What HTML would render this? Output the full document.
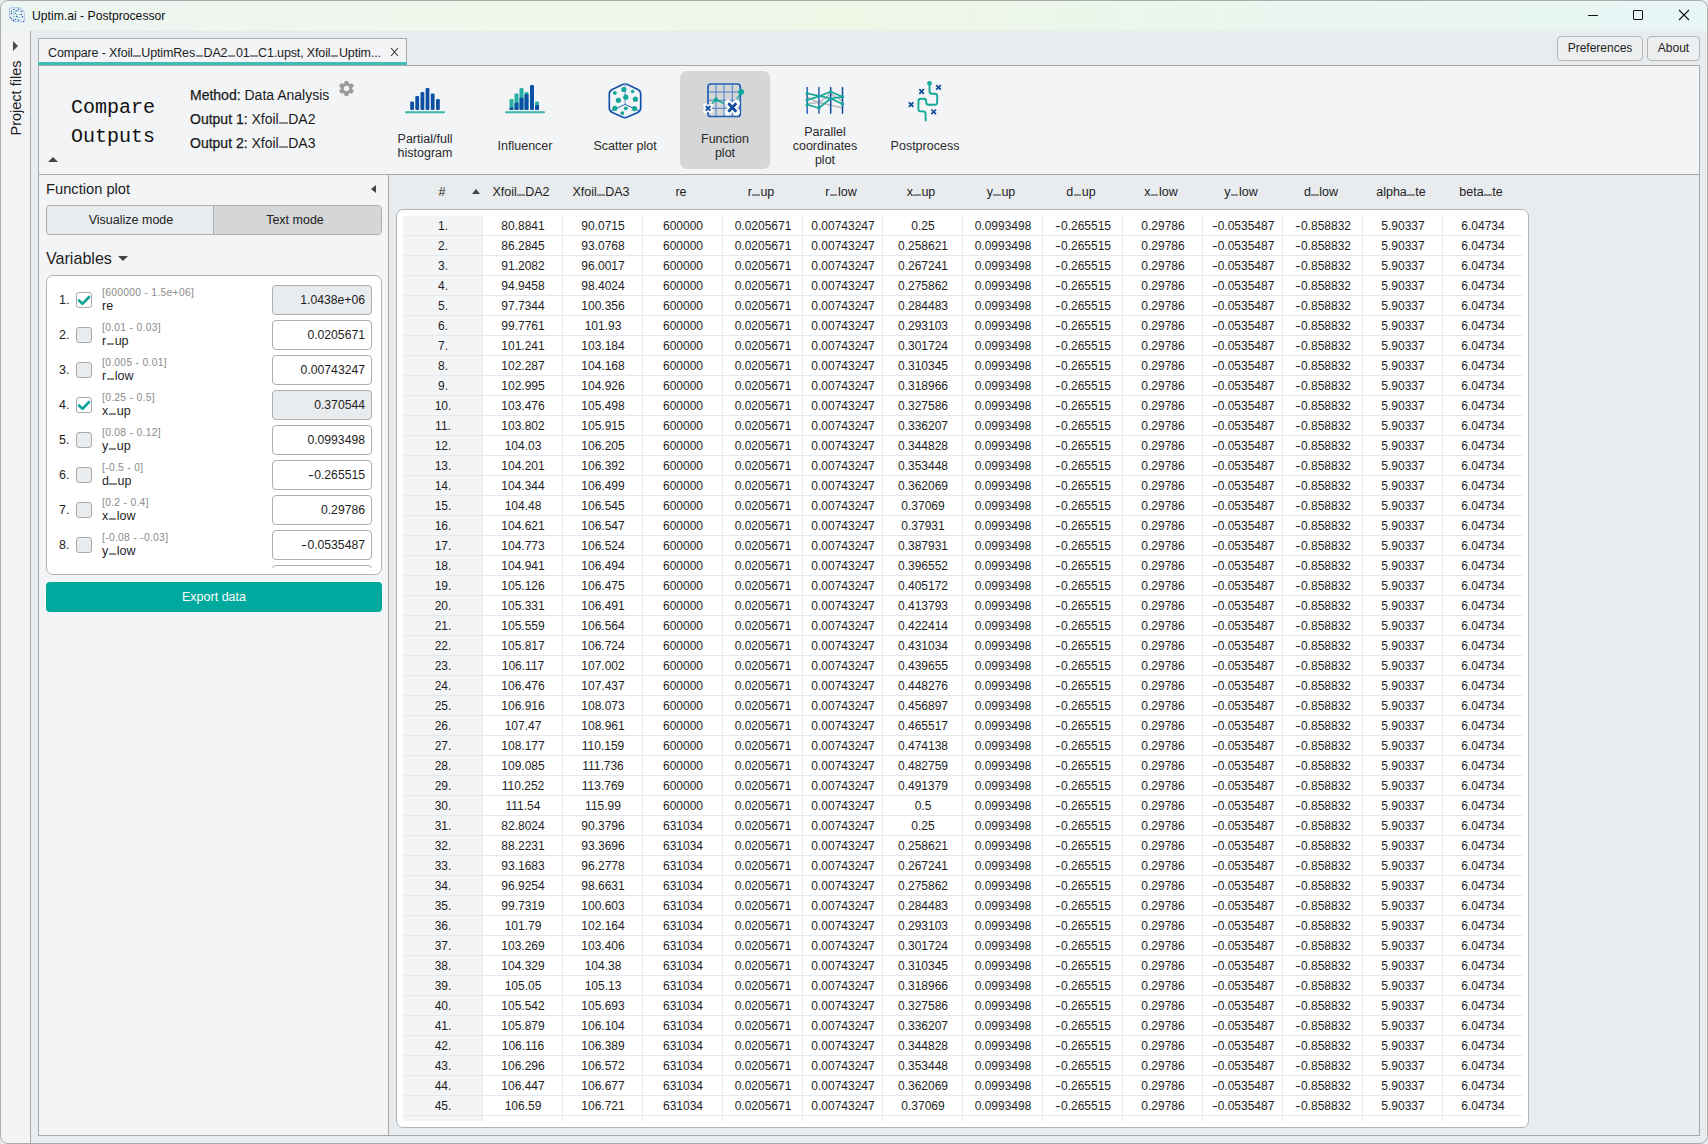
<!DOCTYPE html><html><head><meta charset="utf-8"><style>
*{box-sizing:border-box;margin:0;padding:0}
html,body{width:1708px;height:1144px;overflow:hidden;background:#e9ecef;font-family:'Liberation Sans', sans-serif;color:#1c1c1c}
.a{position:absolute}
.t{position:absolute;white-space:nowrap}
.u{display:inline-block;width:0.6em;height:0.14em;background:#8c8c8c;margin:0 0.04em;vertical-align:0}
.m{display:inline-block;transform:scaleX(1.45);margin:0 1px}
</style></head><body><div class="a" style="left:0;top:0;width:1708px;height:1144px;background:#e9ecef;border:1px solid #ababab;border-radius:8px;overflow:hidden">
</div>
<div class="a" style="left:1px;top:1px;width:1706px;height:30px;border-radius:8px 8px 0 0;background:linear-gradient(90deg,#edf5f3 0%,#f1f6ea 30%,#eef6e6 50%,#e9f6ef 75%,#e7f5f5 100%)"></div>
<div class="t" style="left:32px;top:8.57px;font-size:12.2px;line-height:15px;color:#111;">Uptim.ai - Postprocessor</div>
<svg class="a" style="left:0;top:0" width="30" height="30" viewBox="0 0 30 30">
<path d="M10.5 7.8 H19.5 L24.3 12.3 V20.8 Q24.3 21.8 23.3 21.8 H14.2 L9.5 17.2 V8.8 Q9.5 7.8 10.5 7.8 Z" fill="#f7fbfc" stroke="#a9c4e2" stroke-width="1.1"/>
<path d="M13.8 11.4 H23.6 M13.8 11.4 V21.4 M9.8 8.2 L13.8 11.4" stroke="#b4cbe6" stroke-width="0.9" fill="none"/>
<path d="M16.2 14.5 H21.3 M12.5 16.3 H17 M17.3 16.5 V20 M19.8 19.6 H21.6 M16 10.5 L13.2 13" stroke="#7fd0c4" stroke-width="0.9" fill="none"/>
<g fill="#2d63b0"><circle cx="13.9" cy="9.4" r="0.8"/><circle cx="18.4" cy="9.3" r="0.85"/><circle cx="16.4" cy="10.6" r="0.7"/><circle cx="11.4" cy="11.2" r="0.7"/><circle cx="11.5" cy="13.6" r="0.85"/><circle cx="15.5" cy="13.4" r="0.7"/><circle cx="21.5" cy="11.4" r="0.7"/><circle cx="21.3" cy="14.4" r="0.85"/><circle cx="17" cy="16.4" r="0.8"/><circle cx="22.4" cy="16.8" r="0.85"/><circle cx="15.5" cy="19.4" r="0.75"/><circle cx="18.5" cy="20.2" r="0.8"/><circle cx="13.4" cy="20.4" r="0.7"/><circle cx="23.5" cy="21.3" r="0.6"/><circle cx="10.6" cy="17.3" r="0.6"/><circle cx="11.6" cy="18.6" r="0.6"/><circle cx="19.4" cy="17.4" r="0.5"/></g>
</svg>
<div class="a" style="left:1588px;top:15px;width:10px;height:1px;background:#111"></div>
<div class="a" style="left:1633px;top:10px;width:10px;height:10px;border:1px solid #111;border-radius:1px"></div>
<svg class="a" style="left:1678px;top:9px" width="12" height="12" viewBox="0 0 12 12"><path d="M1 1 L11 11 M11 1 L1 11" stroke="#111" stroke-width="1.1"/></svg>
<div class="a" style="left:1px;top:31px;width:30px;height:1112px;background:#f3f4f6;border-right:1px solid #a9a9a9;border-bottom-left-radius:7px"></div>
<div class="a" style="left:13px;top:41px;width:0;height:0;border-top:5px solid transparent;border-bottom:5px solid transparent;border-left:5.5px solid #4a4a4a"></div>
<div class="t" style="left:-24px;top:87.6px;width:80px;height:20px;font-size:14.5px;line-height:20px;text-align:center;transform:rotate(-90deg);color:#222">Project files</div>
<div class="a" style="left:38px;top:38px;width:369px;height:28px;background:#f3f4f6;border:1px solid #a9a9a9;border-bottom:none"></div>
<div class="a" style="left:38px;top:62px;width:369px;height:3px;background:#3dbdb3"></div>
<div class="t" style="left:48px;top:44.67px;font-size:12.5px;line-height:16px;color:#222;letter-spacing:-0.14px">Compare - Xfoil<span class="u"></span>UptimRes<span class="u"></span>DA2<span class="u"></span>01<span class="u"></span>C1.upst, Xfoil<span class="u"></span>Uptim...</div>
<svg class="a" style="left:390px;top:47px" width="9" height="10" viewBox="0 0 9 10"><path d="M1 1 L8 9 M8 1 L1 9" stroke="#333" stroke-width="1.1"/></svg>
<div class="a" style="left:1557px;top:36px;width:86px;height:25px;border:1px solid #b5b5b5;border-radius:4px;background:#eceef0"></div>
<div class="t" style="left:1557.00px;top:41.34px;width:86px;text-align:center;font-size:12px;line-height:15px;color:#222;">Preferences</div>
<div class="a" style="left:1647px;top:36px;width:53px;height:25px;border:1px solid #b5b5b5;border-radius:4px;background:#eceef0"></div>
<div class="t" style="left:1647.00px;top:41.34px;width:53px;text-align:center;font-size:12px;line-height:15px;color:#222;">About</div>
<div class="a" style="left:38px;top:65px;width:1662px;height:1071px;border:1px solid #a9a9a9;background:#e9ecef"></div>
<div class="a" style="left:39px;top:66px;width:1660px;height:109px;background:#f3f4f6;border-bottom:1px solid #a9a9a9"></div>
<div class="t" style="left:71px;top:95.17px;font-size:20px;line-height:25px;font-family:'Liberation Mono', monospace;color:#111;transform:scaleY(1.035);transform-origin:0 71%">Compare</div>
<div class="t" style="left:71px;top:124.17px;font-size:20px;line-height:25px;font-family:'Liberation Mono', monospace;color:#111;transform:scaleY(1.035);transform-origin:0 71%">Outputs</div>
<div class="a" style="left:48px;top:157px;width:0;height:0;border-left:5px solid transparent;border-right:5px solid transparent;border-bottom:5px solid #444"></div>
<div class="t" style="left:190px;top:86.15px;font-size:14px;line-height:18px;color:#1a1a1a;"><span style="-webkit-text-stroke:0.25px #1a1a1a">Method:</span> Data Analysis</div>
<div class="t" style="left:190px;top:110.15px;font-size:14px;line-height:18px;color:#1a1a1a;"><span style="-webkit-text-stroke:0.25px #1a1a1a">Output 1:</span> Xfoil<span class="u"></span>DA2</div>
<div class="t" style="left:190px;top:134.15px;font-size:14px;line-height:18px;color:#1a1a1a;"><span style="-webkit-text-stroke:0.25px #1a1a1a">Output 2:</span> Xfoil<span class="u"></span>DA3</div>
<svg class="a" style="left:337px;top:78.5px" width="19" height="19" viewBox="0 0 24 24"><path fill="#9a9a9c" d="M19.14 12.94c.04-.3.06-.61.06-.94 0-.32-.02-.64-.07-.94l2.03-1.58a.49.49 0 0 0 .12-.61l-1.92-3.32a.488.488 0 0 0-.59-.22l-2.39.96c-.5-.38-1.03-.7-1.62-.94l-.36-2.54a.484.484 0 0 0-.48-.41h-3.84c-.24 0-.43.17-.47.41l-.36 2.54c-.59.24-1.13.57-1.62.94l-2.39-.96c-.22-.08-.47 0-.59.22L2.74 8.87c-.12.21-.08.47.12.61l2.03 1.58c-.05.3-.09.63-.09.94s.02.64.07.94l-2.03 1.58a.49.49 0 0 0-.12.61l1.92 3.32c.12.22.37.29.59.22l2.39-.96c.5.38 1.03.7 1.62.94l.36 2.54c.05.24.24.41.48.41h3.84c.24 0 .44-.17.47-.41l.36-2.54c.59-.24 1.13-.56 1.62-.94l2.39.96c.22.08.47 0 .59-.22l1.92-3.32c.12-.22.07-.47-.12-.61l-2.01-1.58zM12 15.6c-1.98 0-3.6-1.62-3.6-3.6s1.62-3.6 3.6-3.6 3.6 1.62 3.6 3.6-1.62 3.6-3.6 3.6z"/></svg>
<div class="a" style="left:680px;top:71px;width:90px;height:98px;background:#d5d6d8;border-radius:7px"></div>
<div class="t" style="left:375.00px;top:130.67px;width:100px;text-align:center;font-size:12.5px;line-height:16px;color:#2a2a2a;">Partial/full</div>
<div class="t" style="left:375.00px;top:144.67px;width:100px;text-align:center;font-size:12.5px;line-height:16px;color:#2a2a2a;">histogram</div>
<div class="t" style="left:475.00px;top:137.67px;width:100px;text-align:center;font-size:12.5px;line-height:16px;color:#2a2a2a;">Influencer</div>
<div class="t" style="left:575.00px;top:137.67px;width:100px;text-align:center;font-size:12.5px;line-height:16px;color:#2a2a2a;">Scatter plot</div>
<div class="t" style="left:675.00px;top:130.67px;width:100px;text-align:center;font-size:12.5px;line-height:16px;color:#2a2a2a;">Function</div>
<div class="t" style="left:675.00px;top:144.67px;width:100px;text-align:center;font-size:12.5px;line-height:16px;color:#2a2a2a;">plot</div>
<div class="t" style="left:775.00px;top:123.67px;width:100px;text-align:center;font-size:12.5px;line-height:16px;color:#2a2a2a;">Parallel</div>
<div class="t" style="left:775.00px;top:137.67px;width:100px;text-align:center;font-size:12.5px;line-height:16px;color:#2a2a2a;">coordinates</div>
<div class="t" style="left:775.00px;top:151.67px;width:100px;text-align:center;font-size:12.5px;line-height:16px;color:#2a2a2a;">plot</div>
<div class="t" style="left:875.00px;top:137.67px;width:100px;text-align:center;font-size:12.5px;line-height:16px;color:#2a2a2a;">Postprocess</div>
<svg class="a" style="left:380px;top:66px" width="600" height="70" viewBox="380 66 600 70">
<!-- histogram -->
<rect x="405" y="111.2" width="40" height="2" rx="1" fill="#38b6aa"/>
<g fill="#0b50a2">
<rect x="410.2" y="101.5" width="3.8" height="8.5" rx="1.2"/>
<rect x="415.3" y="96" width="3.8" height="14" rx="1.2"/>
<rect x="420.5" y="92" width="3.8" height="18" rx="1.2"/>
<rect x="425.6" y="88" width="3.8" height="22" rx="1.2"/>
<rect x="430.8" y="93.5" width="3.8" height="16.5" rx="1.2"/>
<rect x="436" y="99" width="3.8" height="11" rx="1.2"/>
</g>
<!-- influencer -->
<rect x="505" y="111.2" width="40" height="2" rx="1" fill="#38b6aa"/>
<g fill="#2ab0a2">
<rect x="509.5" y="99" width="4" height="11" rx="1.2"/>
<rect x="514.5" y="93.5" width="4" height="16.5" rx="1.2"/>
<rect x="519.5" y="88" width="4" height="22" rx="1.2"/>
<rect x="524.5" y="92" width="4" height="18" rx="1.2"/>
<rect x="535" y="101.5" width="4" height="8.5" rx="1.2"/>
</g>
<g fill="#0b50a2">
<rect x="509.5" y="107.5" width="4" height="2.5" rx="1"/>
<rect x="514.5" y="102.5" width="4" height="7.5" rx="1.2"/>
<rect x="519.5" y="97.5" width="4" height="12.5" rx="1.2"/>
<rect x="524.5" y="94" width="4" height="16" rx="1.2"/>
<rect x="530" y="85" width="4" height="25" rx="1.2"/>
<rect x="535" y="105" width="4" height="5" rx="1.2"/>
</g>
<!-- scatter -->
<path d="M622.5 84.6 Q625 83.4 627.5 84.6 L637.8 89.4 Q640.7 90.8 640.7 93.8 V108 Q640.7 111 637.8 112.4 L627.5 117.1 Q625 118.3 622.5 117.1 L612.2 112.4 Q609.3 111 609.3 108 V93.8 Q609.3 90.8 612.2 89.4 Z" fill="none" stroke="#1554a8" stroke-width="1.7"/>
<path d="M625.1 84 V104.4" stroke="#7c9fd2" stroke-width="1.1" fill="none"/>
<path d="M625.1 104.4 L610.3 111.2 M625.1 104.4 L639.9 111.2" stroke="#2a63b2" stroke-width="1" fill="none"/>
<g fill="#14a899">
<circle cx="623.8" cy="89.5" r="2.6"/><circle cx="614.9" cy="93" r="1.9"/><circle cx="632.6" cy="91.5" r="1.8"/>
<circle cx="625.8" cy="97.2" r="2.6"/><circle cx="618.4" cy="100.3" r="2.6"/><circle cx="635.4" cy="99.2" r="2.6"/>
<circle cx="614.9" cy="108.3" r="2.6"/><circle cx="625.8" cy="108.3" r="1.9"/><circle cx="634.5" cy="108.6" r="2.6"/><circle cx="622.3" cy="113.1" r="1.9"/>
</g>
<!-- function plot -->
<rect x="708" y="84" width="32.3" height="32.5" rx="2.8" fill="none" stroke="#1f5fb3" stroke-width="1.7"/>
<path d="M716 84.5 V116 M724 84.5 V116 M732.3 84.5 V116 M708.5 92 H740 M708.5 100.3 H740 M708.5 108.3 H740" stroke="#4a7fc6" stroke-width="1"/>
<path d="M710.5 105 L716 99.8 L726 104.3 M736.5 100 L741 92" stroke="#14a899" stroke-width="1.5" fill="none"/>
<circle cx="716" cy="99.8" r="2.3" fill="#14a899"/>
<circle cx="741.1" cy="92" r="2.9" fill="#14a899"/>
<path d="M705.5 105.7 L710.7 110.9 M710.7 105.7 L705.5 110.9" stroke="#fff" stroke-width="4.5" stroke-linecap="round"/>
<path d="M705.8 106 L710.4 110.6 M710.4 106 L705.8 110.6" stroke="#0f4c9c" stroke-width="1.8"/>
<path d="M728 103 L736.6 112 M736.6 103 L728 112" stroke="#fff" stroke-width="6.5" stroke-linecap="round"/>
<path d="M728.3 103.3 L736.3 111.7 M736.3 103.3 L728.3 111.7" stroke="#0f4c9c" stroke-width="2.8"/>
<!-- parallel -->
<g stroke="#bdbdbd" stroke-width="1.6" fill="none"><path d="M807.2 97.1 L818.9 102.7 L830.7 94 L842.5 101"/><path d="M807.2 103.8 L818.9 102.4 L830.7 105.2 L842.5 108"/></g>
<path d="M807.2 87.5 V113.2 M818.9 87.5 V113.2" stroke="#2963b5" stroke-width="1.5" stroke-linecap="round"/>
<path d="M830.7 87.5 V113.2 M842.5 87.5 V113.2" stroke="#0d4b9c" stroke-width="1.5" stroke-linecap="round"/>
<g stroke="#14a899" stroke-width="1.7" fill="none" stroke-linejoin="round"><path d="M807.2 93.5 L818.9 95.9 L830.7 98.5 L842.5 104"/><path d="M807.2 100 L818.9 96.4 L830.7 91.8 L842.5 96.8"/><path d="M807.2 104.7 L818.9 108 L830.7 98.5 L842.5 96.8"/></g>
<g fill="#14a899"><circle cx="807.2" cy="93.5" r="1.7"/><circle cx="807.2" cy="100" r="1.7"/><circle cx="807.2" cy="104.7" r="1.7"/><circle cx="818.9" cy="108" r="1.7"/><circle cx="830.7" cy="91.8" r="1.6"/><circle cx="842.5" cy="96.8" r="1.7"/><circle cx="842.5" cy="104" r="1.8"/></g>
<!-- postprocess -->
<path d="M929.5 83 V91 Q929.5 93.7 932 93.7 H934.7 Q937.2 93.7 937.2 96.2 V102.3 Q937.2 104.8 934.7 104.8 H928.7 Q926.2 104.8 926.2 102.3 V101.2 Q926.2 98.7 923.7 98.7 H920.9 Q918.4 98.7 918.4 101.2 V108.9 Q918.4 111.4 920.9 111.4 H923.1 Q925.6 111.4 925.6 113.9 V120.5" stroke="#14a899" stroke-width="1.9" fill="none" stroke-linecap="round"/>
<circle cx="929.5" cy="83.2" r="2.3" fill="#14a899"/>
<g stroke="#0f4c9c" stroke-width="1.7"><path d="M936.2 85.1 L940.8 89.7 M940.8 85.1 L936.2 89.7"/><path d="M919.3 89.2 L923.9 93.8 M923.9 89.2 L919.3 93.8"/><path d="M908.8 102.3 L913.4 106.9 M913.4 102.3 L908.8 106.9"/><path d="M931.4 109.5 L936 114.1 M936 109.5 L931.4 114.1"/></g>
</svg>
<div class="a" style="left:39px;top:175px;width:350px;height:960px;background:#f3f4f6;border-right:1px solid #a9a9a9"></div>
<div class="t" style="left:46px;top:179.91px;font-size:14.7px;line-height:18px;color:#1e1e1e;">Function plot</div>
<div class="a" style="left:371px;top:184.8px;width:0;height:0;border-top:4.9px solid transparent;border-bottom:4.9px solid transparent;border-right:5px solid #444"></div>
<div class="a" style="left:46px;top:205px;width:336px;height:30px;border:1px solid #aeaeae;border-radius:4px;overflow:hidden;background:#e9ecef"><div class="a" style="left:166px;top:0;width:169px;height:28px;background:#d5d6d8;border-left:1px solid #aeaeae"></div></div>
<div class="t" style="left:48.00px;top:211.67px;width:166px;text-align:center;font-size:12.5px;line-height:16px;color:#222;">Visualize mode</div>
<div class="t" style="left:212.00px;top:211.67px;width:166px;text-align:center;font-size:12.5px;line-height:16px;color:#222;">Text mode</div>
<div class="t" style="left:46px;top:248.42px;font-size:16.1px;line-height:20px;color:#1e1e1e;">Variables</div>
<div class="a" style="left:118px;top:256px;width:0;height:0;border-left:5px solid transparent;border-right:5px solid transparent;border-top:5px solid #444"></div>
<div class="a" style="left:46px;top:275px;width:336px;height:300px;background:#fff;border:1px solid #b4b4b4;border-radius:7px;overflow:hidden">
<div class="a" style="left:0;top:0;width:334px;height:292px;overflow:hidden">
<div class="t" style="left:12px;top:15.67px;font-size:12.5px;line-height:16px;color:#1e1e1e;">1.</div>
<div class="a" style="left:29px;top:16px;width:16px;height:16px;border:1px solid #a9a9a9;border-radius:3px;background:#fff"></div>
<svg class="a" style="left:30px;top:18px" width="14" height="12" viewBox="0 0 14 12"><path d="M2 6.5 L5.5 9.8 L12 3" stroke="#0aa395" stroke-width="2.6" fill="none" stroke-linecap="round" stroke-linejoin="round"/></svg>
<div class="t" style="left:55px;top:10.13px;font-size:10.3px;line-height:13px;color:#8a8a8a;letter-spacing:0.3px">[600000 - 1.5e+06]</div>
<div class="t" style="left:55px;top:22.17px;font-size:12.5px;line-height:16px;color:#1e1e1e;">re</div>
<div class="a" style="left:225px;top:9px;width:100px;height:30px;border:1px solid #aeaeae;border-radius:4px;background:#e9ecef"></div>
<div class="t" style="left:228.00px;top:17.27px;width:90px;text-align:right;font-size:12.2px;line-height:15px;color:#1e1e1e;">1.0438e+06</div>
<div class="t" style="left:12px;top:50.67px;font-size:12.5px;line-height:16px;color:#1e1e1e;">2.</div>
<div class="a" style="left:29px;top:51px;width:16px;height:16px;border:1px solid #a9a9a9;border-radius:3px;background:#e9ecef"></div>
<div class="t" style="left:55px;top:45.13px;font-size:10.3px;line-height:13px;color:#8a8a8a;letter-spacing:0.3px">[0.01 - 0.03]</div>
<div class="t" style="left:55px;top:57.17px;font-size:12.5px;line-height:16px;color:#1e1e1e;">r<span class="u"></span>up</div>
<div class="a" style="left:225px;top:44px;width:100px;height:30px;border:1px solid #aeaeae;border-radius:4px;background:#fff"></div>
<div class="t" style="left:228.00px;top:52.27px;width:90px;text-align:right;font-size:12.2px;line-height:15px;color:#1e1e1e;">0.0205671</div>
<div class="t" style="left:12px;top:85.67px;font-size:12.5px;line-height:16px;color:#1e1e1e;">3.</div>
<div class="a" style="left:29px;top:86px;width:16px;height:16px;border:1px solid #a9a9a9;border-radius:3px;background:#e9ecef"></div>
<div class="t" style="left:55px;top:80.13px;font-size:10.3px;line-height:13px;color:#8a8a8a;letter-spacing:0.3px">[0.005 - 0.01]</div>
<div class="t" style="left:55px;top:92.17px;font-size:12.5px;line-height:16px;color:#1e1e1e;">r<span class="u"></span>low</div>
<div class="a" style="left:225px;top:79px;width:100px;height:30px;border:1px solid #aeaeae;border-radius:4px;background:#fff"></div>
<div class="t" style="left:228.00px;top:87.27px;width:90px;text-align:right;font-size:12.2px;line-height:15px;color:#1e1e1e;">0.00743247</div>
<div class="t" style="left:12px;top:120.67px;font-size:12.5px;line-height:16px;color:#1e1e1e;">4.</div>
<div class="a" style="left:29px;top:121px;width:16px;height:16px;border:1px solid #a9a9a9;border-radius:3px;background:#fff"></div>
<svg class="a" style="left:30px;top:123px" width="14" height="12" viewBox="0 0 14 12"><path d="M2 6.5 L5.5 9.8 L12 3" stroke="#0aa395" stroke-width="2.6" fill="none" stroke-linecap="round" stroke-linejoin="round"/></svg>
<div class="t" style="left:55px;top:115.13px;font-size:10.3px;line-height:13px;color:#8a8a8a;letter-spacing:0.3px">[0.25 - 0.5]</div>
<div class="t" style="left:55px;top:127.17px;font-size:12.5px;line-height:16px;color:#1e1e1e;">x<span class="u"></span>up</div>
<div class="a" style="left:225px;top:114px;width:100px;height:30px;border:1px solid #aeaeae;border-radius:4px;background:#e9ecef"></div>
<div class="t" style="left:228.00px;top:122.27px;width:90px;text-align:right;font-size:12.2px;line-height:15px;color:#1e1e1e;">0.370544</div>
<div class="t" style="left:12px;top:155.67px;font-size:12.5px;line-height:16px;color:#1e1e1e;">5.</div>
<div class="a" style="left:29px;top:156px;width:16px;height:16px;border:1px solid #a9a9a9;border-radius:3px;background:#e9ecef"></div>
<div class="t" style="left:55px;top:150.13px;font-size:10.3px;line-height:13px;color:#8a8a8a;letter-spacing:0.3px">[0.08 - 0.12]</div>
<div class="t" style="left:55px;top:162.17px;font-size:12.5px;line-height:16px;color:#1e1e1e;">y<span class="u"></span>up</div>
<div class="a" style="left:225px;top:149px;width:100px;height:30px;border:1px solid #aeaeae;border-radius:4px;background:#fff"></div>
<div class="t" style="left:228.00px;top:157.27px;width:90px;text-align:right;font-size:12.2px;line-height:15px;color:#1e1e1e;">0.0993498</div>
<div class="t" style="left:12px;top:190.67px;font-size:12.5px;line-height:16px;color:#1e1e1e;">6.</div>
<div class="a" style="left:29px;top:191px;width:16px;height:16px;border:1px solid #a9a9a9;border-radius:3px;background:#e9ecef"></div>
<div class="t" style="left:55px;top:185.13px;font-size:10.3px;line-height:13px;color:#8a8a8a;letter-spacing:0.3px">[-0.5 - 0]</div>
<div class="t" style="left:55px;top:197.17px;font-size:12.5px;line-height:16px;color:#1e1e1e;">d<span class="u"></span>up</div>
<div class="a" style="left:225px;top:184px;width:100px;height:30px;border:1px solid #aeaeae;border-radius:4px;background:#fff"></div>
<div class="t" style="left:228.00px;top:192.27px;width:90px;text-align:right;font-size:12.2px;line-height:15px;color:#1e1e1e;"><span class="m">-</span>0.265515</div>
<div class="t" style="left:12px;top:225.67px;font-size:12.5px;line-height:16px;color:#1e1e1e;">7.</div>
<div class="a" style="left:29px;top:226px;width:16px;height:16px;border:1px solid #a9a9a9;border-radius:3px;background:#e9ecef"></div>
<div class="t" style="left:55px;top:220.13px;font-size:10.3px;line-height:13px;color:#8a8a8a;letter-spacing:0.3px">[0.2 - 0.4]</div>
<div class="t" style="left:55px;top:232.17px;font-size:12.5px;line-height:16px;color:#1e1e1e;">x<span class="u"></span>low</div>
<div class="a" style="left:225px;top:219px;width:100px;height:30px;border:1px solid #aeaeae;border-radius:4px;background:#fff"></div>
<div class="t" style="left:228.00px;top:227.27px;width:90px;text-align:right;font-size:12.2px;line-height:15px;color:#1e1e1e;">0.29786</div>
<div class="t" style="left:12px;top:260.67px;font-size:12.5px;line-height:16px;color:#1e1e1e;">8.</div>
<div class="a" style="left:29px;top:261px;width:16px;height:16px;border:1px solid #a9a9a9;border-radius:3px;background:#e9ecef"></div>
<div class="t" style="left:55px;top:255.13px;font-size:10.3px;line-height:13px;color:#8a8a8a;letter-spacing:0.3px">[-0.08 - -0.03]</div>
<div class="t" style="left:55px;top:267.17px;font-size:12.5px;line-height:16px;color:#1e1e1e;">y<span class="u"></span>low</div>
<div class="a" style="left:225px;top:254px;width:100px;height:30px;border:1px solid #aeaeae;border-radius:4px;background:#fff"></div>
<div class="t" style="left:228.00px;top:262.27px;width:90px;text-align:right;font-size:12.2px;line-height:15px;color:#1e1e1e;"><span class="m">-</span>0.0535487</div>
<div class="a" style="left:225px;top:289px;width:100px;height:30px;border:1px solid #aeaeae;border-radius:4px;background:#fff"></div>
</div></div>
<div class="a" style="left:46px;top:582px;width:336px;height:30px;background:#00a99d;border-radius:4px"></div>
<div class="t" style="left:46.00px;top:588.67px;width:336px;text-align:center;font-size:12.5px;line-height:16px;color:#ffffff;">Export data</div>
<div class="t" style="left:402.00px;top:183.97px;width:80px;text-align:center;font-size:12.5px;line-height:16px;color:#222;">#</div>
<div class="t" style="left:481.00px;top:183.97px;width:80px;text-align:center;font-size:12.5px;line-height:16px;color:#222;">Xfoil<span class="u"></span>DA2</div>
<div class="t" style="left:561.00px;top:183.97px;width:80px;text-align:center;font-size:12.5px;line-height:16px;color:#222;">Xfoil<span class="u"></span>DA3</div>
<div class="t" style="left:641.00px;top:183.97px;width:80px;text-align:center;font-size:12.5px;line-height:16px;color:#222;">re</div>
<div class="t" style="left:721.00px;top:183.97px;width:80px;text-align:center;font-size:12.5px;line-height:16px;color:#222;">r<span class="u"></span>up</div>
<div class="t" style="left:801.00px;top:183.97px;width:80px;text-align:center;font-size:12.5px;line-height:16px;color:#222;">r<span class="u"></span>low</div>
<div class="t" style="left:881.00px;top:183.97px;width:80px;text-align:center;font-size:12.5px;line-height:16px;color:#222;">x<span class="u"></span>up</div>
<div class="t" style="left:961.00px;top:183.97px;width:80px;text-align:center;font-size:12.5px;line-height:16px;color:#222;">y<span class="u"></span>up</div>
<div class="t" style="left:1041.00px;top:183.97px;width:80px;text-align:center;font-size:12.5px;line-height:16px;color:#222;">d<span class="u"></span>up</div>
<div class="t" style="left:1121.00px;top:183.97px;width:80px;text-align:center;font-size:12.5px;line-height:16px;color:#222;">x<span class="u"></span>low</div>
<div class="t" style="left:1201.00px;top:183.97px;width:80px;text-align:center;font-size:12.5px;line-height:16px;color:#222;">y<span class="u"></span>low</div>
<div class="t" style="left:1281.00px;top:183.97px;width:80px;text-align:center;font-size:12.5px;line-height:16px;color:#222;">d<span class="u"></span>low</div>
<div class="t" style="left:1361.00px;top:183.97px;width:80px;text-align:center;font-size:12.5px;line-height:16px;color:#222;">alpha<span class="u"></span>te</div>
<div class="t" style="left:1441.00px;top:183.97px;width:80px;text-align:center;font-size:12.5px;line-height:16px;color:#222;">beta<span class="u"></span>te</div>
<div class="a" style="left:472px;top:189px;width:0;height:0;border-left:4.5px solid transparent;border-right:4.5px solid transparent;border-bottom:5px solid #444"></div>
<div class="a" style="left:396px;top:209px;width:1133px;height:919px;background:#fff;border:1px solid #b4b4b4;border-radius:7px;overflow:hidden">
<div class="a" style="left:6px;top:6px;width:1119px;height:905px;overflow:hidden">
<div class="a" style="left:0;top:0;width:79px;height:1000px;background:#f3f4f6"></div>
<div class="a" style="left:79px;top:0;width:1px;height:1000px;background:#e6e9ec"></div>
<div class="a" style="left:159px;top:0;width:1px;height:1000px;background:#e6e9ec"></div>
<div class="a" style="left:239px;top:0;width:1px;height:1000px;background:#e6e9ec"></div>
<div class="a" style="left:319px;top:0;width:1px;height:1000px;background:#e6e9ec"></div>
<div class="a" style="left:399px;top:0;width:1px;height:1000px;background:#e6e9ec"></div>
<div class="a" style="left:479px;top:0;width:1px;height:1000px;background:#e6e9ec"></div>
<div class="a" style="left:559px;top:0;width:1px;height:1000px;background:#e6e9ec"></div>
<div class="a" style="left:639px;top:0;width:1px;height:1000px;background:#e6e9ec"></div>
<div class="a" style="left:719px;top:0;width:1px;height:1000px;background:#e6e9ec"></div>
<div class="a" style="left:799px;top:0;width:1px;height:1000px;background:#e6e9ec"></div>
<div class="a" style="left:879px;top:0;width:1px;height:1000px;background:#e6e9ec"></div>
<div class="a" style="left:959px;top:0;width:1px;height:1000px;background:#e6e9ec"></div>
<div class="a" style="left:1039px;top:0;width:1px;height:1000px;background:#e6e9ec"></div>
<div class="a" style="left:0;top:19px;width:1120px;height:1px;background:#e6e9ec"></div>
<div class="a" style="left:0;top:39px;width:1120px;height:1px;background:#e6e9ec"></div>
<div class="a" style="left:0;top:59px;width:1120px;height:1px;background:#e6e9ec"></div>
<div class="a" style="left:0;top:79px;width:1120px;height:1px;background:#e6e9ec"></div>
<div class="a" style="left:0;top:99px;width:1120px;height:1px;background:#e6e9ec"></div>
<div class="a" style="left:0;top:119px;width:1120px;height:1px;background:#e6e9ec"></div>
<div class="a" style="left:0;top:139px;width:1120px;height:1px;background:#e6e9ec"></div>
<div class="a" style="left:0;top:159px;width:1120px;height:1px;background:#e6e9ec"></div>
<div class="a" style="left:0;top:179px;width:1120px;height:1px;background:#e6e9ec"></div>
<div class="a" style="left:0;top:199px;width:1120px;height:1px;background:#e6e9ec"></div>
<div class="a" style="left:0;top:219px;width:1120px;height:1px;background:#e6e9ec"></div>
<div class="a" style="left:0;top:239px;width:1120px;height:1px;background:#e6e9ec"></div>
<div class="a" style="left:0;top:259px;width:1120px;height:1px;background:#e6e9ec"></div>
<div class="a" style="left:0;top:279px;width:1120px;height:1px;background:#e6e9ec"></div>
<div class="a" style="left:0;top:299px;width:1120px;height:1px;background:#e6e9ec"></div>
<div class="a" style="left:0;top:319px;width:1120px;height:1px;background:#e6e9ec"></div>
<div class="a" style="left:0;top:339px;width:1120px;height:1px;background:#e6e9ec"></div>
<div class="a" style="left:0;top:359px;width:1120px;height:1px;background:#e6e9ec"></div>
<div class="a" style="left:0;top:379px;width:1120px;height:1px;background:#e6e9ec"></div>
<div class="a" style="left:0;top:399px;width:1120px;height:1px;background:#e6e9ec"></div>
<div class="a" style="left:0;top:419px;width:1120px;height:1px;background:#e6e9ec"></div>
<div class="a" style="left:0;top:439px;width:1120px;height:1px;background:#e6e9ec"></div>
<div class="a" style="left:0;top:459px;width:1120px;height:1px;background:#e6e9ec"></div>
<div class="a" style="left:0;top:479px;width:1120px;height:1px;background:#e6e9ec"></div>
<div class="a" style="left:0;top:499px;width:1120px;height:1px;background:#e6e9ec"></div>
<div class="a" style="left:0;top:519px;width:1120px;height:1px;background:#e6e9ec"></div>
<div class="a" style="left:0;top:539px;width:1120px;height:1px;background:#e6e9ec"></div>
<div class="a" style="left:0;top:559px;width:1120px;height:1px;background:#e6e9ec"></div>
<div class="a" style="left:0;top:579px;width:1120px;height:1px;background:#e6e9ec"></div>
<div class="a" style="left:0;top:599px;width:1120px;height:1px;background:#e6e9ec"></div>
<div class="a" style="left:0;top:619px;width:1120px;height:1px;background:#e6e9ec"></div>
<div class="a" style="left:0;top:639px;width:1120px;height:1px;background:#e6e9ec"></div>
<div class="a" style="left:0;top:659px;width:1120px;height:1px;background:#e6e9ec"></div>
<div class="a" style="left:0;top:679px;width:1120px;height:1px;background:#e6e9ec"></div>
<div class="a" style="left:0;top:699px;width:1120px;height:1px;background:#e6e9ec"></div>
<div class="a" style="left:0;top:719px;width:1120px;height:1px;background:#e6e9ec"></div>
<div class="a" style="left:0;top:739px;width:1120px;height:1px;background:#e6e9ec"></div>
<div class="a" style="left:0;top:759px;width:1120px;height:1px;background:#e6e9ec"></div>
<div class="a" style="left:0;top:779px;width:1120px;height:1px;background:#e6e9ec"></div>
<div class="a" style="left:0;top:799px;width:1120px;height:1px;background:#e6e9ec"></div>
<div class="a" style="left:0;top:819px;width:1120px;height:1px;background:#e6e9ec"></div>
<div class="a" style="left:0;top:839px;width:1120px;height:1px;background:#e6e9ec"></div>
<div class="a" style="left:0;top:859px;width:1120px;height:1px;background:#e6e9ec"></div>
<div class="a" style="left:0;top:879px;width:1120px;height:1px;background:#e6e9ec"></div>
<div class="a" style="left:0;top:899px;width:1120px;height:1px;background:#e6e9ec"></div>
<div class="a" style="left:0;top:919px;width:1120px;height:1px;background:#e6e9ec"></div>
<div class="t" style="left:0.00px;top:3.34px;width:80px;text-align:center;font-size:12px;line-height:15px;color:#1e1e1e;">1.</div>
<div class="t" style="left:80.00px;top:3.34px;width:80px;text-align:center;font-size:12px;line-height:15px;color:#1e1e1e;">80.8841</div>
<div class="t" style="left:160.00px;top:3.34px;width:80px;text-align:center;font-size:12px;line-height:15px;color:#1e1e1e;">90.0715</div>
<div class="t" style="left:240.00px;top:3.34px;width:80px;text-align:center;font-size:12px;line-height:15px;color:#1e1e1e;">600000</div>
<div class="t" style="left:320.00px;top:3.34px;width:80px;text-align:center;font-size:12px;line-height:15px;color:#1e1e1e;">0.0205671</div>
<div class="t" style="left:400.00px;top:3.34px;width:80px;text-align:center;font-size:12px;line-height:15px;color:#1e1e1e;">0.00743247</div>
<div class="t" style="left:480.00px;top:3.34px;width:80px;text-align:center;font-size:12px;line-height:15px;color:#1e1e1e;">0.25</div>
<div class="t" style="left:560.00px;top:3.34px;width:80px;text-align:center;font-size:12px;line-height:15px;color:#1e1e1e;">0.0993498</div>
<div class="t" style="left:640.00px;top:3.34px;width:80px;text-align:center;font-size:12px;line-height:15px;color:#1e1e1e;"><span class="m">-</span>0.265515</div>
<div class="t" style="left:720.00px;top:3.34px;width:80px;text-align:center;font-size:12px;line-height:15px;color:#1e1e1e;">0.29786</div>
<div class="t" style="left:800.00px;top:3.34px;width:80px;text-align:center;font-size:12px;line-height:15px;color:#1e1e1e;"><span class="m">-</span>0.0535487</div>
<div class="t" style="left:880.00px;top:3.34px;width:80px;text-align:center;font-size:12px;line-height:15px;color:#1e1e1e;"><span class="m">-</span>0.858832</div>
<div class="t" style="left:960.00px;top:3.34px;width:80px;text-align:center;font-size:12px;line-height:15px;color:#1e1e1e;">5.90337</div>
<div class="t" style="left:1040.00px;top:3.34px;width:80px;text-align:center;font-size:12px;line-height:15px;color:#1e1e1e;">6.04734</div>
<div class="t" style="left:0.00px;top:23.34px;width:80px;text-align:center;font-size:12px;line-height:15px;color:#1e1e1e;">2.</div>
<div class="t" style="left:80.00px;top:23.34px;width:80px;text-align:center;font-size:12px;line-height:15px;color:#1e1e1e;">86.2845</div>
<div class="t" style="left:160.00px;top:23.34px;width:80px;text-align:center;font-size:12px;line-height:15px;color:#1e1e1e;">93.0768</div>
<div class="t" style="left:240.00px;top:23.34px;width:80px;text-align:center;font-size:12px;line-height:15px;color:#1e1e1e;">600000</div>
<div class="t" style="left:320.00px;top:23.34px;width:80px;text-align:center;font-size:12px;line-height:15px;color:#1e1e1e;">0.0205671</div>
<div class="t" style="left:400.00px;top:23.34px;width:80px;text-align:center;font-size:12px;line-height:15px;color:#1e1e1e;">0.00743247</div>
<div class="t" style="left:480.00px;top:23.34px;width:80px;text-align:center;font-size:12px;line-height:15px;color:#1e1e1e;">0.258621</div>
<div class="t" style="left:560.00px;top:23.34px;width:80px;text-align:center;font-size:12px;line-height:15px;color:#1e1e1e;">0.0993498</div>
<div class="t" style="left:640.00px;top:23.34px;width:80px;text-align:center;font-size:12px;line-height:15px;color:#1e1e1e;"><span class="m">-</span>0.265515</div>
<div class="t" style="left:720.00px;top:23.34px;width:80px;text-align:center;font-size:12px;line-height:15px;color:#1e1e1e;">0.29786</div>
<div class="t" style="left:800.00px;top:23.34px;width:80px;text-align:center;font-size:12px;line-height:15px;color:#1e1e1e;"><span class="m">-</span>0.0535487</div>
<div class="t" style="left:880.00px;top:23.34px;width:80px;text-align:center;font-size:12px;line-height:15px;color:#1e1e1e;"><span class="m">-</span>0.858832</div>
<div class="t" style="left:960.00px;top:23.34px;width:80px;text-align:center;font-size:12px;line-height:15px;color:#1e1e1e;">5.90337</div>
<div class="t" style="left:1040.00px;top:23.34px;width:80px;text-align:center;font-size:12px;line-height:15px;color:#1e1e1e;">6.04734</div>
<div class="t" style="left:0.00px;top:43.34px;width:80px;text-align:center;font-size:12px;line-height:15px;color:#1e1e1e;">3.</div>
<div class="t" style="left:80.00px;top:43.34px;width:80px;text-align:center;font-size:12px;line-height:15px;color:#1e1e1e;">91.2082</div>
<div class="t" style="left:160.00px;top:43.34px;width:80px;text-align:center;font-size:12px;line-height:15px;color:#1e1e1e;">96.0017</div>
<div class="t" style="left:240.00px;top:43.34px;width:80px;text-align:center;font-size:12px;line-height:15px;color:#1e1e1e;">600000</div>
<div class="t" style="left:320.00px;top:43.34px;width:80px;text-align:center;font-size:12px;line-height:15px;color:#1e1e1e;">0.0205671</div>
<div class="t" style="left:400.00px;top:43.34px;width:80px;text-align:center;font-size:12px;line-height:15px;color:#1e1e1e;">0.00743247</div>
<div class="t" style="left:480.00px;top:43.34px;width:80px;text-align:center;font-size:12px;line-height:15px;color:#1e1e1e;">0.267241</div>
<div class="t" style="left:560.00px;top:43.34px;width:80px;text-align:center;font-size:12px;line-height:15px;color:#1e1e1e;">0.0993498</div>
<div class="t" style="left:640.00px;top:43.34px;width:80px;text-align:center;font-size:12px;line-height:15px;color:#1e1e1e;"><span class="m">-</span>0.265515</div>
<div class="t" style="left:720.00px;top:43.34px;width:80px;text-align:center;font-size:12px;line-height:15px;color:#1e1e1e;">0.29786</div>
<div class="t" style="left:800.00px;top:43.34px;width:80px;text-align:center;font-size:12px;line-height:15px;color:#1e1e1e;"><span class="m">-</span>0.0535487</div>
<div class="t" style="left:880.00px;top:43.34px;width:80px;text-align:center;font-size:12px;line-height:15px;color:#1e1e1e;"><span class="m">-</span>0.858832</div>
<div class="t" style="left:960.00px;top:43.34px;width:80px;text-align:center;font-size:12px;line-height:15px;color:#1e1e1e;">5.90337</div>
<div class="t" style="left:1040.00px;top:43.34px;width:80px;text-align:center;font-size:12px;line-height:15px;color:#1e1e1e;">6.04734</div>
<div class="t" style="left:0.00px;top:63.34px;width:80px;text-align:center;font-size:12px;line-height:15px;color:#1e1e1e;">4.</div>
<div class="t" style="left:80.00px;top:63.34px;width:80px;text-align:center;font-size:12px;line-height:15px;color:#1e1e1e;">94.9458</div>
<div class="t" style="left:160.00px;top:63.34px;width:80px;text-align:center;font-size:12px;line-height:15px;color:#1e1e1e;">98.4024</div>
<div class="t" style="left:240.00px;top:63.34px;width:80px;text-align:center;font-size:12px;line-height:15px;color:#1e1e1e;">600000</div>
<div class="t" style="left:320.00px;top:63.34px;width:80px;text-align:center;font-size:12px;line-height:15px;color:#1e1e1e;">0.0205671</div>
<div class="t" style="left:400.00px;top:63.34px;width:80px;text-align:center;font-size:12px;line-height:15px;color:#1e1e1e;">0.00743247</div>
<div class="t" style="left:480.00px;top:63.34px;width:80px;text-align:center;font-size:12px;line-height:15px;color:#1e1e1e;">0.275862</div>
<div class="t" style="left:560.00px;top:63.34px;width:80px;text-align:center;font-size:12px;line-height:15px;color:#1e1e1e;">0.0993498</div>
<div class="t" style="left:640.00px;top:63.34px;width:80px;text-align:center;font-size:12px;line-height:15px;color:#1e1e1e;"><span class="m">-</span>0.265515</div>
<div class="t" style="left:720.00px;top:63.34px;width:80px;text-align:center;font-size:12px;line-height:15px;color:#1e1e1e;">0.29786</div>
<div class="t" style="left:800.00px;top:63.34px;width:80px;text-align:center;font-size:12px;line-height:15px;color:#1e1e1e;"><span class="m">-</span>0.0535487</div>
<div class="t" style="left:880.00px;top:63.34px;width:80px;text-align:center;font-size:12px;line-height:15px;color:#1e1e1e;"><span class="m">-</span>0.858832</div>
<div class="t" style="left:960.00px;top:63.34px;width:80px;text-align:center;font-size:12px;line-height:15px;color:#1e1e1e;">5.90337</div>
<div class="t" style="left:1040.00px;top:63.34px;width:80px;text-align:center;font-size:12px;line-height:15px;color:#1e1e1e;">6.04734</div>
<div class="t" style="left:0.00px;top:83.34px;width:80px;text-align:center;font-size:12px;line-height:15px;color:#1e1e1e;">5.</div>
<div class="t" style="left:80.00px;top:83.34px;width:80px;text-align:center;font-size:12px;line-height:15px;color:#1e1e1e;">97.7344</div>
<div class="t" style="left:160.00px;top:83.34px;width:80px;text-align:center;font-size:12px;line-height:15px;color:#1e1e1e;">100.356</div>
<div class="t" style="left:240.00px;top:83.34px;width:80px;text-align:center;font-size:12px;line-height:15px;color:#1e1e1e;">600000</div>
<div class="t" style="left:320.00px;top:83.34px;width:80px;text-align:center;font-size:12px;line-height:15px;color:#1e1e1e;">0.0205671</div>
<div class="t" style="left:400.00px;top:83.34px;width:80px;text-align:center;font-size:12px;line-height:15px;color:#1e1e1e;">0.00743247</div>
<div class="t" style="left:480.00px;top:83.34px;width:80px;text-align:center;font-size:12px;line-height:15px;color:#1e1e1e;">0.284483</div>
<div class="t" style="left:560.00px;top:83.34px;width:80px;text-align:center;font-size:12px;line-height:15px;color:#1e1e1e;">0.0993498</div>
<div class="t" style="left:640.00px;top:83.34px;width:80px;text-align:center;font-size:12px;line-height:15px;color:#1e1e1e;"><span class="m">-</span>0.265515</div>
<div class="t" style="left:720.00px;top:83.34px;width:80px;text-align:center;font-size:12px;line-height:15px;color:#1e1e1e;">0.29786</div>
<div class="t" style="left:800.00px;top:83.34px;width:80px;text-align:center;font-size:12px;line-height:15px;color:#1e1e1e;"><span class="m">-</span>0.0535487</div>
<div class="t" style="left:880.00px;top:83.34px;width:80px;text-align:center;font-size:12px;line-height:15px;color:#1e1e1e;"><span class="m">-</span>0.858832</div>
<div class="t" style="left:960.00px;top:83.34px;width:80px;text-align:center;font-size:12px;line-height:15px;color:#1e1e1e;">5.90337</div>
<div class="t" style="left:1040.00px;top:83.34px;width:80px;text-align:center;font-size:12px;line-height:15px;color:#1e1e1e;">6.04734</div>
<div class="t" style="left:0.00px;top:103.34px;width:80px;text-align:center;font-size:12px;line-height:15px;color:#1e1e1e;">6.</div>
<div class="t" style="left:80.00px;top:103.34px;width:80px;text-align:center;font-size:12px;line-height:15px;color:#1e1e1e;">99.7761</div>
<div class="t" style="left:160.00px;top:103.34px;width:80px;text-align:center;font-size:12px;line-height:15px;color:#1e1e1e;">101.93</div>
<div class="t" style="left:240.00px;top:103.34px;width:80px;text-align:center;font-size:12px;line-height:15px;color:#1e1e1e;">600000</div>
<div class="t" style="left:320.00px;top:103.34px;width:80px;text-align:center;font-size:12px;line-height:15px;color:#1e1e1e;">0.0205671</div>
<div class="t" style="left:400.00px;top:103.34px;width:80px;text-align:center;font-size:12px;line-height:15px;color:#1e1e1e;">0.00743247</div>
<div class="t" style="left:480.00px;top:103.34px;width:80px;text-align:center;font-size:12px;line-height:15px;color:#1e1e1e;">0.293103</div>
<div class="t" style="left:560.00px;top:103.34px;width:80px;text-align:center;font-size:12px;line-height:15px;color:#1e1e1e;">0.0993498</div>
<div class="t" style="left:640.00px;top:103.34px;width:80px;text-align:center;font-size:12px;line-height:15px;color:#1e1e1e;"><span class="m">-</span>0.265515</div>
<div class="t" style="left:720.00px;top:103.34px;width:80px;text-align:center;font-size:12px;line-height:15px;color:#1e1e1e;">0.29786</div>
<div class="t" style="left:800.00px;top:103.34px;width:80px;text-align:center;font-size:12px;line-height:15px;color:#1e1e1e;"><span class="m">-</span>0.0535487</div>
<div class="t" style="left:880.00px;top:103.34px;width:80px;text-align:center;font-size:12px;line-height:15px;color:#1e1e1e;"><span class="m">-</span>0.858832</div>
<div class="t" style="left:960.00px;top:103.34px;width:80px;text-align:center;font-size:12px;line-height:15px;color:#1e1e1e;">5.90337</div>
<div class="t" style="left:1040.00px;top:103.34px;width:80px;text-align:center;font-size:12px;line-height:15px;color:#1e1e1e;">6.04734</div>
<div class="t" style="left:0.00px;top:123.34px;width:80px;text-align:center;font-size:12px;line-height:15px;color:#1e1e1e;">7.</div>
<div class="t" style="left:80.00px;top:123.34px;width:80px;text-align:center;font-size:12px;line-height:15px;color:#1e1e1e;">101.241</div>
<div class="t" style="left:160.00px;top:123.34px;width:80px;text-align:center;font-size:12px;line-height:15px;color:#1e1e1e;">103.184</div>
<div class="t" style="left:240.00px;top:123.34px;width:80px;text-align:center;font-size:12px;line-height:15px;color:#1e1e1e;">600000</div>
<div class="t" style="left:320.00px;top:123.34px;width:80px;text-align:center;font-size:12px;line-height:15px;color:#1e1e1e;">0.0205671</div>
<div class="t" style="left:400.00px;top:123.34px;width:80px;text-align:center;font-size:12px;line-height:15px;color:#1e1e1e;">0.00743247</div>
<div class="t" style="left:480.00px;top:123.34px;width:80px;text-align:center;font-size:12px;line-height:15px;color:#1e1e1e;">0.301724</div>
<div class="t" style="left:560.00px;top:123.34px;width:80px;text-align:center;font-size:12px;line-height:15px;color:#1e1e1e;">0.0993498</div>
<div class="t" style="left:640.00px;top:123.34px;width:80px;text-align:center;font-size:12px;line-height:15px;color:#1e1e1e;"><span class="m">-</span>0.265515</div>
<div class="t" style="left:720.00px;top:123.34px;width:80px;text-align:center;font-size:12px;line-height:15px;color:#1e1e1e;">0.29786</div>
<div class="t" style="left:800.00px;top:123.34px;width:80px;text-align:center;font-size:12px;line-height:15px;color:#1e1e1e;"><span class="m">-</span>0.0535487</div>
<div class="t" style="left:880.00px;top:123.34px;width:80px;text-align:center;font-size:12px;line-height:15px;color:#1e1e1e;"><span class="m">-</span>0.858832</div>
<div class="t" style="left:960.00px;top:123.34px;width:80px;text-align:center;font-size:12px;line-height:15px;color:#1e1e1e;">5.90337</div>
<div class="t" style="left:1040.00px;top:123.34px;width:80px;text-align:center;font-size:12px;line-height:15px;color:#1e1e1e;">6.04734</div>
<div class="t" style="left:0.00px;top:143.34px;width:80px;text-align:center;font-size:12px;line-height:15px;color:#1e1e1e;">8.</div>
<div class="t" style="left:80.00px;top:143.34px;width:80px;text-align:center;font-size:12px;line-height:15px;color:#1e1e1e;">102.287</div>
<div class="t" style="left:160.00px;top:143.34px;width:80px;text-align:center;font-size:12px;line-height:15px;color:#1e1e1e;">104.168</div>
<div class="t" style="left:240.00px;top:143.34px;width:80px;text-align:center;font-size:12px;line-height:15px;color:#1e1e1e;">600000</div>
<div class="t" style="left:320.00px;top:143.34px;width:80px;text-align:center;font-size:12px;line-height:15px;color:#1e1e1e;">0.0205671</div>
<div class="t" style="left:400.00px;top:143.34px;width:80px;text-align:center;font-size:12px;line-height:15px;color:#1e1e1e;">0.00743247</div>
<div class="t" style="left:480.00px;top:143.34px;width:80px;text-align:center;font-size:12px;line-height:15px;color:#1e1e1e;">0.310345</div>
<div class="t" style="left:560.00px;top:143.34px;width:80px;text-align:center;font-size:12px;line-height:15px;color:#1e1e1e;">0.0993498</div>
<div class="t" style="left:640.00px;top:143.34px;width:80px;text-align:center;font-size:12px;line-height:15px;color:#1e1e1e;"><span class="m">-</span>0.265515</div>
<div class="t" style="left:720.00px;top:143.34px;width:80px;text-align:center;font-size:12px;line-height:15px;color:#1e1e1e;">0.29786</div>
<div class="t" style="left:800.00px;top:143.34px;width:80px;text-align:center;font-size:12px;line-height:15px;color:#1e1e1e;"><span class="m">-</span>0.0535487</div>
<div class="t" style="left:880.00px;top:143.34px;width:80px;text-align:center;font-size:12px;line-height:15px;color:#1e1e1e;"><span class="m">-</span>0.858832</div>
<div class="t" style="left:960.00px;top:143.34px;width:80px;text-align:center;font-size:12px;line-height:15px;color:#1e1e1e;">5.90337</div>
<div class="t" style="left:1040.00px;top:143.34px;width:80px;text-align:center;font-size:12px;line-height:15px;color:#1e1e1e;">6.04734</div>
<div class="t" style="left:0.00px;top:163.34px;width:80px;text-align:center;font-size:12px;line-height:15px;color:#1e1e1e;">9.</div>
<div class="t" style="left:80.00px;top:163.34px;width:80px;text-align:center;font-size:12px;line-height:15px;color:#1e1e1e;">102.995</div>
<div class="t" style="left:160.00px;top:163.34px;width:80px;text-align:center;font-size:12px;line-height:15px;color:#1e1e1e;">104.926</div>
<div class="t" style="left:240.00px;top:163.34px;width:80px;text-align:center;font-size:12px;line-height:15px;color:#1e1e1e;">600000</div>
<div class="t" style="left:320.00px;top:163.34px;width:80px;text-align:center;font-size:12px;line-height:15px;color:#1e1e1e;">0.0205671</div>
<div class="t" style="left:400.00px;top:163.34px;width:80px;text-align:center;font-size:12px;line-height:15px;color:#1e1e1e;">0.00743247</div>
<div class="t" style="left:480.00px;top:163.34px;width:80px;text-align:center;font-size:12px;line-height:15px;color:#1e1e1e;">0.318966</div>
<div class="t" style="left:560.00px;top:163.34px;width:80px;text-align:center;font-size:12px;line-height:15px;color:#1e1e1e;">0.0993498</div>
<div class="t" style="left:640.00px;top:163.34px;width:80px;text-align:center;font-size:12px;line-height:15px;color:#1e1e1e;"><span class="m">-</span>0.265515</div>
<div class="t" style="left:720.00px;top:163.34px;width:80px;text-align:center;font-size:12px;line-height:15px;color:#1e1e1e;">0.29786</div>
<div class="t" style="left:800.00px;top:163.34px;width:80px;text-align:center;font-size:12px;line-height:15px;color:#1e1e1e;"><span class="m">-</span>0.0535487</div>
<div class="t" style="left:880.00px;top:163.34px;width:80px;text-align:center;font-size:12px;line-height:15px;color:#1e1e1e;"><span class="m">-</span>0.858832</div>
<div class="t" style="left:960.00px;top:163.34px;width:80px;text-align:center;font-size:12px;line-height:15px;color:#1e1e1e;">5.90337</div>
<div class="t" style="left:1040.00px;top:163.34px;width:80px;text-align:center;font-size:12px;line-height:15px;color:#1e1e1e;">6.04734</div>
<div class="t" style="left:0.00px;top:183.34px;width:80px;text-align:center;font-size:12px;line-height:15px;color:#1e1e1e;">10.</div>
<div class="t" style="left:80.00px;top:183.34px;width:80px;text-align:center;font-size:12px;line-height:15px;color:#1e1e1e;">103.476</div>
<div class="t" style="left:160.00px;top:183.34px;width:80px;text-align:center;font-size:12px;line-height:15px;color:#1e1e1e;">105.498</div>
<div class="t" style="left:240.00px;top:183.34px;width:80px;text-align:center;font-size:12px;line-height:15px;color:#1e1e1e;">600000</div>
<div class="t" style="left:320.00px;top:183.34px;width:80px;text-align:center;font-size:12px;line-height:15px;color:#1e1e1e;">0.0205671</div>
<div class="t" style="left:400.00px;top:183.34px;width:80px;text-align:center;font-size:12px;line-height:15px;color:#1e1e1e;">0.00743247</div>
<div class="t" style="left:480.00px;top:183.34px;width:80px;text-align:center;font-size:12px;line-height:15px;color:#1e1e1e;">0.327586</div>
<div class="t" style="left:560.00px;top:183.34px;width:80px;text-align:center;font-size:12px;line-height:15px;color:#1e1e1e;">0.0993498</div>
<div class="t" style="left:640.00px;top:183.34px;width:80px;text-align:center;font-size:12px;line-height:15px;color:#1e1e1e;"><span class="m">-</span>0.265515</div>
<div class="t" style="left:720.00px;top:183.34px;width:80px;text-align:center;font-size:12px;line-height:15px;color:#1e1e1e;">0.29786</div>
<div class="t" style="left:800.00px;top:183.34px;width:80px;text-align:center;font-size:12px;line-height:15px;color:#1e1e1e;"><span class="m">-</span>0.0535487</div>
<div class="t" style="left:880.00px;top:183.34px;width:80px;text-align:center;font-size:12px;line-height:15px;color:#1e1e1e;"><span class="m">-</span>0.858832</div>
<div class="t" style="left:960.00px;top:183.34px;width:80px;text-align:center;font-size:12px;line-height:15px;color:#1e1e1e;">5.90337</div>
<div class="t" style="left:1040.00px;top:183.34px;width:80px;text-align:center;font-size:12px;line-height:15px;color:#1e1e1e;">6.04734</div>
<div class="t" style="left:0.00px;top:203.34px;width:80px;text-align:center;font-size:12px;line-height:15px;color:#1e1e1e;">11.</div>
<div class="t" style="left:80.00px;top:203.34px;width:80px;text-align:center;font-size:12px;line-height:15px;color:#1e1e1e;">103.802</div>
<div class="t" style="left:160.00px;top:203.34px;width:80px;text-align:center;font-size:12px;line-height:15px;color:#1e1e1e;">105.915</div>
<div class="t" style="left:240.00px;top:203.34px;width:80px;text-align:center;font-size:12px;line-height:15px;color:#1e1e1e;">600000</div>
<div class="t" style="left:320.00px;top:203.34px;width:80px;text-align:center;font-size:12px;line-height:15px;color:#1e1e1e;">0.0205671</div>
<div class="t" style="left:400.00px;top:203.34px;width:80px;text-align:center;font-size:12px;line-height:15px;color:#1e1e1e;">0.00743247</div>
<div class="t" style="left:480.00px;top:203.34px;width:80px;text-align:center;font-size:12px;line-height:15px;color:#1e1e1e;">0.336207</div>
<div class="t" style="left:560.00px;top:203.34px;width:80px;text-align:center;font-size:12px;line-height:15px;color:#1e1e1e;">0.0993498</div>
<div class="t" style="left:640.00px;top:203.34px;width:80px;text-align:center;font-size:12px;line-height:15px;color:#1e1e1e;"><span class="m">-</span>0.265515</div>
<div class="t" style="left:720.00px;top:203.34px;width:80px;text-align:center;font-size:12px;line-height:15px;color:#1e1e1e;">0.29786</div>
<div class="t" style="left:800.00px;top:203.34px;width:80px;text-align:center;font-size:12px;line-height:15px;color:#1e1e1e;"><span class="m">-</span>0.0535487</div>
<div class="t" style="left:880.00px;top:203.34px;width:80px;text-align:center;font-size:12px;line-height:15px;color:#1e1e1e;"><span class="m">-</span>0.858832</div>
<div class="t" style="left:960.00px;top:203.34px;width:80px;text-align:center;font-size:12px;line-height:15px;color:#1e1e1e;">5.90337</div>
<div class="t" style="left:1040.00px;top:203.34px;width:80px;text-align:center;font-size:12px;line-height:15px;color:#1e1e1e;">6.04734</div>
<div class="t" style="left:0.00px;top:223.34px;width:80px;text-align:center;font-size:12px;line-height:15px;color:#1e1e1e;">12.</div>
<div class="t" style="left:80.00px;top:223.34px;width:80px;text-align:center;font-size:12px;line-height:15px;color:#1e1e1e;">104.03</div>
<div class="t" style="left:160.00px;top:223.34px;width:80px;text-align:center;font-size:12px;line-height:15px;color:#1e1e1e;">106.205</div>
<div class="t" style="left:240.00px;top:223.34px;width:80px;text-align:center;font-size:12px;line-height:15px;color:#1e1e1e;">600000</div>
<div class="t" style="left:320.00px;top:223.34px;width:80px;text-align:center;font-size:12px;line-height:15px;color:#1e1e1e;">0.0205671</div>
<div class="t" style="left:400.00px;top:223.34px;width:80px;text-align:center;font-size:12px;line-height:15px;color:#1e1e1e;">0.00743247</div>
<div class="t" style="left:480.00px;top:223.34px;width:80px;text-align:center;font-size:12px;line-height:15px;color:#1e1e1e;">0.344828</div>
<div class="t" style="left:560.00px;top:223.34px;width:80px;text-align:center;font-size:12px;line-height:15px;color:#1e1e1e;">0.0993498</div>
<div class="t" style="left:640.00px;top:223.34px;width:80px;text-align:center;font-size:12px;line-height:15px;color:#1e1e1e;"><span class="m">-</span>0.265515</div>
<div class="t" style="left:720.00px;top:223.34px;width:80px;text-align:center;font-size:12px;line-height:15px;color:#1e1e1e;">0.29786</div>
<div class="t" style="left:800.00px;top:223.34px;width:80px;text-align:center;font-size:12px;line-height:15px;color:#1e1e1e;"><span class="m">-</span>0.0535487</div>
<div class="t" style="left:880.00px;top:223.34px;width:80px;text-align:center;font-size:12px;line-height:15px;color:#1e1e1e;"><span class="m">-</span>0.858832</div>
<div class="t" style="left:960.00px;top:223.34px;width:80px;text-align:center;font-size:12px;line-height:15px;color:#1e1e1e;">5.90337</div>
<div class="t" style="left:1040.00px;top:223.34px;width:80px;text-align:center;font-size:12px;line-height:15px;color:#1e1e1e;">6.04734</div>
<div class="t" style="left:0.00px;top:243.34px;width:80px;text-align:center;font-size:12px;line-height:15px;color:#1e1e1e;">13.</div>
<div class="t" style="left:80.00px;top:243.34px;width:80px;text-align:center;font-size:12px;line-height:15px;color:#1e1e1e;">104.201</div>
<div class="t" style="left:160.00px;top:243.34px;width:80px;text-align:center;font-size:12px;line-height:15px;color:#1e1e1e;">106.392</div>
<div class="t" style="left:240.00px;top:243.34px;width:80px;text-align:center;font-size:12px;line-height:15px;color:#1e1e1e;">600000</div>
<div class="t" style="left:320.00px;top:243.34px;width:80px;text-align:center;font-size:12px;line-height:15px;color:#1e1e1e;">0.0205671</div>
<div class="t" style="left:400.00px;top:243.34px;width:80px;text-align:center;font-size:12px;line-height:15px;color:#1e1e1e;">0.00743247</div>
<div class="t" style="left:480.00px;top:243.34px;width:80px;text-align:center;font-size:12px;line-height:15px;color:#1e1e1e;">0.353448</div>
<div class="t" style="left:560.00px;top:243.34px;width:80px;text-align:center;font-size:12px;line-height:15px;color:#1e1e1e;">0.0993498</div>
<div class="t" style="left:640.00px;top:243.34px;width:80px;text-align:center;font-size:12px;line-height:15px;color:#1e1e1e;"><span class="m">-</span>0.265515</div>
<div class="t" style="left:720.00px;top:243.34px;width:80px;text-align:center;font-size:12px;line-height:15px;color:#1e1e1e;">0.29786</div>
<div class="t" style="left:800.00px;top:243.34px;width:80px;text-align:center;font-size:12px;line-height:15px;color:#1e1e1e;"><span class="m">-</span>0.0535487</div>
<div class="t" style="left:880.00px;top:243.34px;width:80px;text-align:center;font-size:12px;line-height:15px;color:#1e1e1e;"><span class="m">-</span>0.858832</div>
<div class="t" style="left:960.00px;top:243.34px;width:80px;text-align:center;font-size:12px;line-height:15px;color:#1e1e1e;">5.90337</div>
<div class="t" style="left:1040.00px;top:243.34px;width:80px;text-align:center;font-size:12px;line-height:15px;color:#1e1e1e;">6.04734</div>
<div class="t" style="left:0.00px;top:263.34px;width:80px;text-align:center;font-size:12px;line-height:15px;color:#1e1e1e;">14.</div>
<div class="t" style="left:80.00px;top:263.34px;width:80px;text-align:center;font-size:12px;line-height:15px;color:#1e1e1e;">104.344</div>
<div class="t" style="left:160.00px;top:263.34px;width:80px;text-align:center;font-size:12px;line-height:15px;color:#1e1e1e;">106.499</div>
<div class="t" style="left:240.00px;top:263.34px;width:80px;text-align:center;font-size:12px;line-height:15px;color:#1e1e1e;">600000</div>
<div class="t" style="left:320.00px;top:263.34px;width:80px;text-align:center;font-size:12px;line-height:15px;color:#1e1e1e;">0.0205671</div>
<div class="t" style="left:400.00px;top:263.34px;width:80px;text-align:center;font-size:12px;line-height:15px;color:#1e1e1e;">0.00743247</div>
<div class="t" style="left:480.00px;top:263.34px;width:80px;text-align:center;font-size:12px;line-height:15px;color:#1e1e1e;">0.362069</div>
<div class="t" style="left:560.00px;top:263.34px;width:80px;text-align:center;font-size:12px;line-height:15px;color:#1e1e1e;">0.0993498</div>
<div class="t" style="left:640.00px;top:263.34px;width:80px;text-align:center;font-size:12px;line-height:15px;color:#1e1e1e;"><span class="m">-</span>0.265515</div>
<div class="t" style="left:720.00px;top:263.34px;width:80px;text-align:center;font-size:12px;line-height:15px;color:#1e1e1e;">0.29786</div>
<div class="t" style="left:800.00px;top:263.34px;width:80px;text-align:center;font-size:12px;line-height:15px;color:#1e1e1e;"><span class="m">-</span>0.0535487</div>
<div class="t" style="left:880.00px;top:263.34px;width:80px;text-align:center;font-size:12px;line-height:15px;color:#1e1e1e;"><span class="m">-</span>0.858832</div>
<div class="t" style="left:960.00px;top:263.34px;width:80px;text-align:center;font-size:12px;line-height:15px;color:#1e1e1e;">5.90337</div>
<div class="t" style="left:1040.00px;top:263.34px;width:80px;text-align:center;font-size:12px;line-height:15px;color:#1e1e1e;">6.04734</div>
<div class="t" style="left:0.00px;top:283.34px;width:80px;text-align:center;font-size:12px;line-height:15px;color:#1e1e1e;">15.</div>
<div class="t" style="left:80.00px;top:283.34px;width:80px;text-align:center;font-size:12px;line-height:15px;color:#1e1e1e;">104.48</div>
<div class="t" style="left:160.00px;top:283.34px;width:80px;text-align:center;font-size:12px;line-height:15px;color:#1e1e1e;">106.545</div>
<div class="t" style="left:240.00px;top:283.34px;width:80px;text-align:center;font-size:12px;line-height:15px;color:#1e1e1e;">600000</div>
<div class="t" style="left:320.00px;top:283.34px;width:80px;text-align:center;font-size:12px;line-height:15px;color:#1e1e1e;">0.0205671</div>
<div class="t" style="left:400.00px;top:283.34px;width:80px;text-align:center;font-size:12px;line-height:15px;color:#1e1e1e;">0.00743247</div>
<div class="t" style="left:480.00px;top:283.34px;width:80px;text-align:center;font-size:12px;line-height:15px;color:#1e1e1e;">0.37069</div>
<div class="t" style="left:560.00px;top:283.34px;width:80px;text-align:center;font-size:12px;line-height:15px;color:#1e1e1e;">0.0993498</div>
<div class="t" style="left:640.00px;top:283.34px;width:80px;text-align:center;font-size:12px;line-height:15px;color:#1e1e1e;"><span class="m">-</span>0.265515</div>
<div class="t" style="left:720.00px;top:283.34px;width:80px;text-align:center;font-size:12px;line-height:15px;color:#1e1e1e;">0.29786</div>
<div class="t" style="left:800.00px;top:283.34px;width:80px;text-align:center;font-size:12px;line-height:15px;color:#1e1e1e;"><span class="m">-</span>0.0535487</div>
<div class="t" style="left:880.00px;top:283.34px;width:80px;text-align:center;font-size:12px;line-height:15px;color:#1e1e1e;"><span class="m">-</span>0.858832</div>
<div class="t" style="left:960.00px;top:283.34px;width:80px;text-align:center;font-size:12px;line-height:15px;color:#1e1e1e;">5.90337</div>
<div class="t" style="left:1040.00px;top:283.34px;width:80px;text-align:center;font-size:12px;line-height:15px;color:#1e1e1e;">6.04734</div>
<div class="t" style="left:0.00px;top:303.34px;width:80px;text-align:center;font-size:12px;line-height:15px;color:#1e1e1e;">16.</div>
<div class="t" style="left:80.00px;top:303.34px;width:80px;text-align:center;font-size:12px;line-height:15px;color:#1e1e1e;">104.621</div>
<div class="t" style="left:160.00px;top:303.34px;width:80px;text-align:center;font-size:12px;line-height:15px;color:#1e1e1e;">106.547</div>
<div class="t" style="left:240.00px;top:303.34px;width:80px;text-align:center;font-size:12px;line-height:15px;color:#1e1e1e;">600000</div>
<div class="t" style="left:320.00px;top:303.34px;width:80px;text-align:center;font-size:12px;line-height:15px;color:#1e1e1e;">0.0205671</div>
<div class="t" style="left:400.00px;top:303.34px;width:80px;text-align:center;font-size:12px;line-height:15px;color:#1e1e1e;">0.00743247</div>
<div class="t" style="left:480.00px;top:303.34px;width:80px;text-align:center;font-size:12px;line-height:15px;color:#1e1e1e;">0.37931</div>
<div class="t" style="left:560.00px;top:303.34px;width:80px;text-align:center;font-size:12px;line-height:15px;color:#1e1e1e;">0.0993498</div>
<div class="t" style="left:640.00px;top:303.34px;width:80px;text-align:center;font-size:12px;line-height:15px;color:#1e1e1e;"><span class="m">-</span>0.265515</div>
<div class="t" style="left:720.00px;top:303.34px;width:80px;text-align:center;font-size:12px;line-height:15px;color:#1e1e1e;">0.29786</div>
<div class="t" style="left:800.00px;top:303.34px;width:80px;text-align:center;font-size:12px;line-height:15px;color:#1e1e1e;"><span class="m">-</span>0.0535487</div>
<div class="t" style="left:880.00px;top:303.34px;width:80px;text-align:center;font-size:12px;line-height:15px;color:#1e1e1e;"><span class="m">-</span>0.858832</div>
<div class="t" style="left:960.00px;top:303.34px;width:80px;text-align:center;font-size:12px;line-height:15px;color:#1e1e1e;">5.90337</div>
<div class="t" style="left:1040.00px;top:303.34px;width:80px;text-align:center;font-size:12px;line-height:15px;color:#1e1e1e;">6.04734</div>
<div class="t" style="left:0.00px;top:323.34px;width:80px;text-align:center;font-size:12px;line-height:15px;color:#1e1e1e;">17.</div>
<div class="t" style="left:80.00px;top:323.34px;width:80px;text-align:center;font-size:12px;line-height:15px;color:#1e1e1e;">104.773</div>
<div class="t" style="left:160.00px;top:323.34px;width:80px;text-align:center;font-size:12px;line-height:15px;color:#1e1e1e;">106.524</div>
<div class="t" style="left:240.00px;top:323.34px;width:80px;text-align:center;font-size:12px;line-height:15px;color:#1e1e1e;">600000</div>
<div class="t" style="left:320.00px;top:323.34px;width:80px;text-align:center;font-size:12px;line-height:15px;color:#1e1e1e;">0.0205671</div>
<div class="t" style="left:400.00px;top:323.34px;width:80px;text-align:center;font-size:12px;line-height:15px;color:#1e1e1e;">0.00743247</div>
<div class="t" style="left:480.00px;top:323.34px;width:80px;text-align:center;font-size:12px;line-height:15px;color:#1e1e1e;">0.387931</div>
<div class="t" style="left:560.00px;top:323.34px;width:80px;text-align:center;font-size:12px;line-height:15px;color:#1e1e1e;">0.0993498</div>
<div class="t" style="left:640.00px;top:323.34px;width:80px;text-align:center;font-size:12px;line-height:15px;color:#1e1e1e;"><span class="m">-</span>0.265515</div>
<div class="t" style="left:720.00px;top:323.34px;width:80px;text-align:center;font-size:12px;line-height:15px;color:#1e1e1e;">0.29786</div>
<div class="t" style="left:800.00px;top:323.34px;width:80px;text-align:center;font-size:12px;line-height:15px;color:#1e1e1e;"><span class="m">-</span>0.0535487</div>
<div class="t" style="left:880.00px;top:323.34px;width:80px;text-align:center;font-size:12px;line-height:15px;color:#1e1e1e;"><span class="m">-</span>0.858832</div>
<div class="t" style="left:960.00px;top:323.34px;width:80px;text-align:center;font-size:12px;line-height:15px;color:#1e1e1e;">5.90337</div>
<div class="t" style="left:1040.00px;top:323.34px;width:80px;text-align:center;font-size:12px;line-height:15px;color:#1e1e1e;">6.04734</div>
<div class="t" style="left:0.00px;top:343.34px;width:80px;text-align:center;font-size:12px;line-height:15px;color:#1e1e1e;">18.</div>
<div class="t" style="left:80.00px;top:343.34px;width:80px;text-align:center;font-size:12px;line-height:15px;color:#1e1e1e;">104.941</div>
<div class="t" style="left:160.00px;top:343.34px;width:80px;text-align:center;font-size:12px;line-height:15px;color:#1e1e1e;">106.494</div>
<div class="t" style="left:240.00px;top:343.34px;width:80px;text-align:center;font-size:12px;line-height:15px;color:#1e1e1e;">600000</div>
<div class="t" style="left:320.00px;top:343.34px;width:80px;text-align:center;font-size:12px;line-height:15px;color:#1e1e1e;">0.0205671</div>
<div class="t" style="left:400.00px;top:343.34px;width:80px;text-align:center;font-size:12px;line-height:15px;color:#1e1e1e;">0.00743247</div>
<div class="t" style="left:480.00px;top:343.34px;width:80px;text-align:center;font-size:12px;line-height:15px;color:#1e1e1e;">0.396552</div>
<div class="t" style="left:560.00px;top:343.34px;width:80px;text-align:center;font-size:12px;line-height:15px;color:#1e1e1e;">0.0993498</div>
<div class="t" style="left:640.00px;top:343.34px;width:80px;text-align:center;font-size:12px;line-height:15px;color:#1e1e1e;"><span class="m">-</span>0.265515</div>
<div class="t" style="left:720.00px;top:343.34px;width:80px;text-align:center;font-size:12px;line-height:15px;color:#1e1e1e;">0.29786</div>
<div class="t" style="left:800.00px;top:343.34px;width:80px;text-align:center;font-size:12px;line-height:15px;color:#1e1e1e;"><span class="m">-</span>0.0535487</div>
<div class="t" style="left:880.00px;top:343.34px;width:80px;text-align:center;font-size:12px;line-height:15px;color:#1e1e1e;"><span class="m">-</span>0.858832</div>
<div class="t" style="left:960.00px;top:343.34px;width:80px;text-align:center;font-size:12px;line-height:15px;color:#1e1e1e;">5.90337</div>
<div class="t" style="left:1040.00px;top:343.34px;width:80px;text-align:center;font-size:12px;line-height:15px;color:#1e1e1e;">6.04734</div>
<div class="t" style="left:0.00px;top:363.34px;width:80px;text-align:center;font-size:12px;line-height:15px;color:#1e1e1e;">19.</div>
<div class="t" style="left:80.00px;top:363.34px;width:80px;text-align:center;font-size:12px;line-height:15px;color:#1e1e1e;">105.126</div>
<div class="t" style="left:160.00px;top:363.34px;width:80px;text-align:center;font-size:12px;line-height:15px;color:#1e1e1e;">106.475</div>
<div class="t" style="left:240.00px;top:363.34px;width:80px;text-align:center;font-size:12px;line-height:15px;color:#1e1e1e;">600000</div>
<div class="t" style="left:320.00px;top:363.34px;width:80px;text-align:center;font-size:12px;line-height:15px;color:#1e1e1e;">0.0205671</div>
<div class="t" style="left:400.00px;top:363.34px;width:80px;text-align:center;font-size:12px;line-height:15px;color:#1e1e1e;">0.00743247</div>
<div class="t" style="left:480.00px;top:363.34px;width:80px;text-align:center;font-size:12px;line-height:15px;color:#1e1e1e;">0.405172</div>
<div class="t" style="left:560.00px;top:363.34px;width:80px;text-align:center;font-size:12px;line-height:15px;color:#1e1e1e;">0.0993498</div>
<div class="t" style="left:640.00px;top:363.34px;width:80px;text-align:center;font-size:12px;line-height:15px;color:#1e1e1e;"><span class="m">-</span>0.265515</div>
<div class="t" style="left:720.00px;top:363.34px;width:80px;text-align:center;font-size:12px;line-height:15px;color:#1e1e1e;">0.29786</div>
<div class="t" style="left:800.00px;top:363.34px;width:80px;text-align:center;font-size:12px;line-height:15px;color:#1e1e1e;"><span class="m">-</span>0.0535487</div>
<div class="t" style="left:880.00px;top:363.34px;width:80px;text-align:center;font-size:12px;line-height:15px;color:#1e1e1e;"><span class="m">-</span>0.858832</div>
<div class="t" style="left:960.00px;top:363.34px;width:80px;text-align:center;font-size:12px;line-height:15px;color:#1e1e1e;">5.90337</div>
<div class="t" style="left:1040.00px;top:363.34px;width:80px;text-align:center;font-size:12px;line-height:15px;color:#1e1e1e;">6.04734</div>
<div class="t" style="left:0.00px;top:383.34px;width:80px;text-align:center;font-size:12px;line-height:15px;color:#1e1e1e;">20.</div>
<div class="t" style="left:80.00px;top:383.34px;width:80px;text-align:center;font-size:12px;line-height:15px;color:#1e1e1e;">105.331</div>
<div class="t" style="left:160.00px;top:383.34px;width:80px;text-align:center;font-size:12px;line-height:15px;color:#1e1e1e;">106.491</div>
<div class="t" style="left:240.00px;top:383.34px;width:80px;text-align:center;font-size:12px;line-height:15px;color:#1e1e1e;">600000</div>
<div class="t" style="left:320.00px;top:383.34px;width:80px;text-align:center;font-size:12px;line-height:15px;color:#1e1e1e;">0.0205671</div>
<div class="t" style="left:400.00px;top:383.34px;width:80px;text-align:center;font-size:12px;line-height:15px;color:#1e1e1e;">0.00743247</div>
<div class="t" style="left:480.00px;top:383.34px;width:80px;text-align:center;font-size:12px;line-height:15px;color:#1e1e1e;">0.413793</div>
<div class="t" style="left:560.00px;top:383.34px;width:80px;text-align:center;font-size:12px;line-height:15px;color:#1e1e1e;">0.0993498</div>
<div class="t" style="left:640.00px;top:383.34px;width:80px;text-align:center;font-size:12px;line-height:15px;color:#1e1e1e;"><span class="m">-</span>0.265515</div>
<div class="t" style="left:720.00px;top:383.34px;width:80px;text-align:center;font-size:12px;line-height:15px;color:#1e1e1e;">0.29786</div>
<div class="t" style="left:800.00px;top:383.34px;width:80px;text-align:center;font-size:12px;line-height:15px;color:#1e1e1e;"><span class="m">-</span>0.0535487</div>
<div class="t" style="left:880.00px;top:383.34px;width:80px;text-align:center;font-size:12px;line-height:15px;color:#1e1e1e;"><span class="m">-</span>0.858832</div>
<div class="t" style="left:960.00px;top:383.34px;width:80px;text-align:center;font-size:12px;line-height:15px;color:#1e1e1e;">5.90337</div>
<div class="t" style="left:1040.00px;top:383.34px;width:80px;text-align:center;font-size:12px;line-height:15px;color:#1e1e1e;">6.04734</div>
<div class="t" style="left:0.00px;top:403.34px;width:80px;text-align:center;font-size:12px;line-height:15px;color:#1e1e1e;">21.</div>
<div class="t" style="left:80.00px;top:403.34px;width:80px;text-align:center;font-size:12px;line-height:15px;color:#1e1e1e;">105.559</div>
<div class="t" style="left:160.00px;top:403.34px;width:80px;text-align:center;font-size:12px;line-height:15px;color:#1e1e1e;">106.564</div>
<div class="t" style="left:240.00px;top:403.34px;width:80px;text-align:center;font-size:12px;line-height:15px;color:#1e1e1e;">600000</div>
<div class="t" style="left:320.00px;top:403.34px;width:80px;text-align:center;font-size:12px;line-height:15px;color:#1e1e1e;">0.0205671</div>
<div class="t" style="left:400.00px;top:403.34px;width:80px;text-align:center;font-size:12px;line-height:15px;color:#1e1e1e;">0.00743247</div>
<div class="t" style="left:480.00px;top:403.34px;width:80px;text-align:center;font-size:12px;line-height:15px;color:#1e1e1e;">0.422414</div>
<div class="t" style="left:560.00px;top:403.34px;width:80px;text-align:center;font-size:12px;line-height:15px;color:#1e1e1e;">0.0993498</div>
<div class="t" style="left:640.00px;top:403.34px;width:80px;text-align:center;font-size:12px;line-height:15px;color:#1e1e1e;"><span class="m">-</span>0.265515</div>
<div class="t" style="left:720.00px;top:403.34px;width:80px;text-align:center;font-size:12px;line-height:15px;color:#1e1e1e;">0.29786</div>
<div class="t" style="left:800.00px;top:403.34px;width:80px;text-align:center;font-size:12px;line-height:15px;color:#1e1e1e;"><span class="m">-</span>0.0535487</div>
<div class="t" style="left:880.00px;top:403.34px;width:80px;text-align:center;font-size:12px;line-height:15px;color:#1e1e1e;"><span class="m">-</span>0.858832</div>
<div class="t" style="left:960.00px;top:403.34px;width:80px;text-align:center;font-size:12px;line-height:15px;color:#1e1e1e;">5.90337</div>
<div class="t" style="left:1040.00px;top:403.34px;width:80px;text-align:center;font-size:12px;line-height:15px;color:#1e1e1e;">6.04734</div>
<div class="t" style="left:0.00px;top:423.34px;width:80px;text-align:center;font-size:12px;line-height:15px;color:#1e1e1e;">22.</div>
<div class="t" style="left:80.00px;top:423.34px;width:80px;text-align:center;font-size:12px;line-height:15px;color:#1e1e1e;">105.817</div>
<div class="t" style="left:160.00px;top:423.34px;width:80px;text-align:center;font-size:12px;line-height:15px;color:#1e1e1e;">106.724</div>
<div class="t" style="left:240.00px;top:423.34px;width:80px;text-align:center;font-size:12px;line-height:15px;color:#1e1e1e;">600000</div>
<div class="t" style="left:320.00px;top:423.34px;width:80px;text-align:center;font-size:12px;line-height:15px;color:#1e1e1e;">0.0205671</div>
<div class="t" style="left:400.00px;top:423.34px;width:80px;text-align:center;font-size:12px;line-height:15px;color:#1e1e1e;">0.00743247</div>
<div class="t" style="left:480.00px;top:423.34px;width:80px;text-align:center;font-size:12px;line-height:15px;color:#1e1e1e;">0.431034</div>
<div class="t" style="left:560.00px;top:423.34px;width:80px;text-align:center;font-size:12px;line-height:15px;color:#1e1e1e;">0.0993498</div>
<div class="t" style="left:640.00px;top:423.34px;width:80px;text-align:center;font-size:12px;line-height:15px;color:#1e1e1e;"><span class="m">-</span>0.265515</div>
<div class="t" style="left:720.00px;top:423.34px;width:80px;text-align:center;font-size:12px;line-height:15px;color:#1e1e1e;">0.29786</div>
<div class="t" style="left:800.00px;top:423.34px;width:80px;text-align:center;font-size:12px;line-height:15px;color:#1e1e1e;"><span class="m">-</span>0.0535487</div>
<div class="t" style="left:880.00px;top:423.34px;width:80px;text-align:center;font-size:12px;line-height:15px;color:#1e1e1e;"><span class="m">-</span>0.858832</div>
<div class="t" style="left:960.00px;top:423.34px;width:80px;text-align:center;font-size:12px;line-height:15px;color:#1e1e1e;">5.90337</div>
<div class="t" style="left:1040.00px;top:423.34px;width:80px;text-align:center;font-size:12px;line-height:15px;color:#1e1e1e;">6.04734</div>
<div class="t" style="left:0.00px;top:443.34px;width:80px;text-align:center;font-size:12px;line-height:15px;color:#1e1e1e;">23.</div>
<div class="t" style="left:80.00px;top:443.34px;width:80px;text-align:center;font-size:12px;line-height:15px;color:#1e1e1e;">106.117</div>
<div class="t" style="left:160.00px;top:443.34px;width:80px;text-align:center;font-size:12px;line-height:15px;color:#1e1e1e;">107.002</div>
<div class="t" style="left:240.00px;top:443.34px;width:80px;text-align:center;font-size:12px;line-height:15px;color:#1e1e1e;">600000</div>
<div class="t" style="left:320.00px;top:443.34px;width:80px;text-align:center;font-size:12px;line-height:15px;color:#1e1e1e;">0.0205671</div>
<div class="t" style="left:400.00px;top:443.34px;width:80px;text-align:center;font-size:12px;line-height:15px;color:#1e1e1e;">0.00743247</div>
<div class="t" style="left:480.00px;top:443.34px;width:80px;text-align:center;font-size:12px;line-height:15px;color:#1e1e1e;">0.439655</div>
<div class="t" style="left:560.00px;top:443.34px;width:80px;text-align:center;font-size:12px;line-height:15px;color:#1e1e1e;">0.0993498</div>
<div class="t" style="left:640.00px;top:443.34px;width:80px;text-align:center;font-size:12px;line-height:15px;color:#1e1e1e;"><span class="m">-</span>0.265515</div>
<div class="t" style="left:720.00px;top:443.34px;width:80px;text-align:center;font-size:12px;line-height:15px;color:#1e1e1e;">0.29786</div>
<div class="t" style="left:800.00px;top:443.34px;width:80px;text-align:center;font-size:12px;line-height:15px;color:#1e1e1e;"><span class="m">-</span>0.0535487</div>
<div class="t" style="left:880.00px;top:443.34px;width:80px;text-align:center;font-size:12px;line-height:15px;color:#1e1e1e;"><span class="m">-</span>0.858832</div>
<div class="t" style="left:960.00px;top:443.34px;width:80px;text-align:center;font-size:12px;line-height:15px;color:#1e1e1e;">5.90337</div>
<div class="t" style="left:1040.00px;top:443.34px;width:80px;text-align:center;font-size:12px;line-height:15px;color:#1e1e1e;">6.04734</div>
<div class="t" style="left:0.00px;top:463.34px;width:80px;text-align:center;font-size:12px;line-height:15px;color:#1e1e1e;">24.</div>
<div class="t" style="left:80.00px;top:463.34px;width:80px;text-align:center;font-size:12px;line-height:15px;color:#1e1e1e;">106.476</div>
<div class="t" style="left:160.00px;top:463.34px;width:80px;text-align:center;font-size:12px;line-height:15px;color:#1e1e1e;">107.437</div>
<div class="t" style="left:240.00px;top:463.34px;width:80px;text-align:center;font-size:12px;line-height:15px;color:#1e1e1e;">600000</div>
<div class="t" style="left:320.00px;top:463.34px;width:80px;text-align:center;font-size:12px;line-height:15px;color:#1e1e1e;">0.0205671</div>
<div class="t" style="left:400.00px;top:463.34px;width:80px;text-align:center;font-size:12px;line-height:15px;color:#1e1e1e;">0.00743247</div>
<div class="t" style="left:480.00px;top:463.34px;width:80px;text-align:center;font-size:12px;line-height:15px;color:#1e1e1e;">0.448276</div>
<div class="t" style="left:560.00px;top:463.34px;width:80px;text-align:center;font-size:12px;line-height:15px;color:#1e1e1e;">0.0993498</div>
<div class="t" style="left:640.00px;top:463.34px;width:80px;text-align:center;font-size:12px;line-height:15px;color:#1e1e1e;"><span class="m">-</span>0.265515</div>
<div class="t" style="left:720.00px;top:463.34px;width:80px;text-align:center;font-size:12px;line-height:15px;color:#1e1e1e;">0.29786</div>
<div class="t" style="left:800.00px;top:463.34px;width:80px;text-align:center;font-size:12px;line-height:15px;color:#1e1e1e;"><span class="m">-</span>0.0535487</div>
<div class="t" style="left:880.00px;top:463.34px;width:80px;text-align:center;font-size:12px;line-height:15px;color:#1e1e1e;"><span class="m">-</span>0.858832</div>
<div class="t" style="left:960.00px;top:463.34px;width:80px;text-align:center;font-size:12px;line-height:15px;color:#1e1e1e;">5.90337</div>
<div class="t" style="left:1040.00px;top:463.34px;width:80px;text-align:center;font-size:12px;line-height:15px;color:#1e1e1e;">6.04734</div>
<div class="t" style="left:0.00px;top:483.34px;width:80px;text-align:center;font-size:12px;line-height:15px;color:#1e1e1e;">25.</div>
<div class="t" style="left:80.00px;top:483.34px;width:80px;text-align:center;font-size:12px;line-height:15px;color:#1e1e1e;">106.916</div>
<div class="t" style="left:160.00px;top:483.34px;width:80px;text-align:center;font-size:12px;line-height:15px;color:#1e1e1e;">108.073</div>
<div class="t" style="left:240.00px;top:483.34px;width:80px;text-align:center;font-size:12px;line-height:15px;color:#1e1e1e;">600000</div>
<div class="t" style="left:320.00px;top:483.34px;width:80px;text-align:center;font-size:12px;line-height:15px;color:#1e1e1e;">0.0205671</div>
<div class="t" style="left:400.00px;top:483.34px;width:80px;text-align:center;font-size:12px;line-height:15px;color:#1e1e1e;">0.00743247</div>
<div class="t" style="left:480.00px;top:483.34px;width:80px;text-align:center;font-size:12px;line-height:15px;color:#1e1e1e;">0.456897</div>
<div class="t" style="left:560.00px;top:483.34px;width:80px;text-align:center;font-size:12px;line-height:15px;color:#1e1e1e;">0.0993498</div>
<div class="t" style="left:640.00px;top:483.34px;width:80px;text-align:center;font-size:12px;line-height:15px;color:#1e1e1e;"><span class="m">-</span>0.265515</div>
<div class="t" style="left:720.00px;top:483.34px;width:80px;text-align:center;font-size:12px;line-height:15px;color:#1e1e1e;">0.29786</div>
<div class="t" style="left:800.00px;top:483.34px;width:80px;text-align:center;font-size:12px;line-height:15px;color:#1e1e1e;"><span class="m">-</span>0.0535487</div>
<div class="t" style="left:880.00px;top:483.34px;width:80px;text-align:center;font-size:12px;line-height:15px;color:#1e1e1e;"><span class="m">-</span>0.858832</div>
<div class="t" style="left:960.00px;top:483.34px;width:80px;text-align:center;font-size:12px;line-height:15px;color:#1e1e1e;">5.90337</div>
<div class="t" style="left:1040.00px;top:483.34px;width:80px;text-align:center;font-size:12px;line-height:15px;color:#1e1e1e;">6.04734</div>
<div class="t" style="left:0.00px;top:503.34px;width:80px;text-align:center;font-size:12px;line-height:15px;color:#1e1e1e;">26.</div>
<div class="t" style="left:80.00px;top:503.34px;width:80px;text-align:center;font-size:12px;line-height:15px;color:#1e1e1e;">107.47</div>
<div class="t" style="left:160.00px;top:503.34px;width:80px;text-align:center;font-size:12px;line-height:15px;color:#1e1e1e;">108.961</div>
<div class="t" style="left:240.00px;top:503.34px;width:80px;text-align:center;font-size:12px;line-height:15px;color:#1e1e1e;">600000</div>
<div class="t" style="left:320.00px;top:503.34px;width:80px;text-align:center;font-size:12px;line-height:15px;color:#1e1e1e;">0.0205671</div>
<div class="t" style="left:400.00px;top:503.34px;width:80px;text-align:center;font-size:12px;line-height:15px;color:#1e1e1e;">0.00743247</div>
<div class="t" style="left:480.00px;top:503.34px;width:80px;text-align:center;font-size:12px;line-height:15px;color:#1e1e1e;">0.465517</div>
<div class="t" style="left:560.00px;top:503.34px;width:80px;text-align:center;font-size:12px;line-height:15px;color:#1e1e1e;">0.0993498</div>
<div class="t" style="left:640.00px;top:503.34px;width:80px;text-align:center;font-size:12px;line-height:15px;color:#1e1e1e;"><span class="m">-</span>0.265515</div>
<div class="t" style="left:720.00px;top:503.34px;width:80px;text-align:center;font-size:12px;line-height:15px;color:#1e1e1e;">0.29786</div>
<div class="t" style="left:800.00px;top:503.34px;width:80px;text-align:center;font-size:12px;line-height:15px;color:#1e1e1e;"><span class="m">-</span>0.0535487</div>
<div class="t" style="left:880.00px;top:503.34px;width:80px;text-align:center;font-size:12px;line-height:15px;color:#1e1e1e;"><span class="m">-</span>0.858832</div>
<div class="t" style="left:960.00px;top:503.34px;width:80px;text-align:center;font-size:12px;line-height:15px;color:#1e1e1e;">5.90337</div>
<div class="t" style="left:1040.00px;top:503.34px;width:80px;text-align:center;font-size:12px;line-height:15px;color:#1e1e1e;">6.04734</div>
<div class="t" style="left:0.00px;top:523.34px;width:80px;text-align:center;font-size:12px;line-height:15px;color:#1e1e1e;">27.</div>
<div class="t" style="left:80.00px;top:523.34px;width:80px;text-align:center;font-size:12px;line-height:15px;color:#1e1e1e;">108.177</div>
<div class="t" style="left:160.00px;top:523.34px;width:80px;text-align:center;font-size:12px;line-height:15px;color:#1e1e1e;">110.159</div>
<div class="t" style="left:240.00px;top:523.34px;width:80px;text-align:center;font-size:12px;line-height:15px;color:#1e1e1e;">600000</div>
<div class="t" style="left:320.00px;top:523.34px;width:80px;text-align:center;font-size:12px;line-height:15px;color:#1e1e1e;">0.0205671</div>
<div class="t" style="left:400.00px;top:523.34px;width:80px;text-align:center;font-size:12px;line-height:15px;color:#1e1e1e;">0.00743247</div>
<div class="t" style="left:480.00px;top:523.34px;width:80px;text-align:center;font-size:12px;line-height:15px;color:#1e1e1e;">0.474138</div>
<div class="t" style="left:560.00px;top:523.34px;width:80px;text-align:center;font-size:12px;line-height:15px;color:#1e1e1e;">0.0993498</div>
<div class="t" style="left:640.00px;top:523.34px;width:80px;text-align:center;font-size:12px;line-height:15px;color:#1e1e1e;"><span class="m">-</span>0.265515</div>
<div class="t" style="left:720.00px;top:523.34px;width:80px;text-align:center;font-size:12px;line-height:15px;color:#1e1e1e;">0.29786</div>
<div class="t" style="left:800.00px;top:523.34px;width:80px;text-align:center;font-size:12px;line-height:15px;color:#1e1e1e;"><span class="m">-</span>0.0535487</div>
<div class="t" style="left:880.00px;top:523.34px;width:80px;text-align:center;font-size:12px;line-height:15px;color:#1e1e1e;"><span class="m">-</span>0.858832</div>
<div class="t" style="left:960.00px;top:523.34px;width:80px;text-align:center;font-size:12px;line-height:15px;color:#1e1e1e;">5.90337</div>
<div class="t" style="left:1040.00px;top:523.34px;width:80px;text-align:center;font-size:12px;line-height:15px;color:#1e1e1e;">6.04734</div>
<div class="t" style="left:0.00px;top:543.34px;width:80px;text-align:center;font-size:12px;line-height:15px;color:#1e1e1e;">28.</div>
<div class="t" style="left:80.00px;top:543.34px;width:80px;text-align:center;font-size:12px;line-height:15px;color:#1e1e1e;">109.085</div>
<div class="t" style="left:160.00px;top:543.34px;width:80px;text-align:center;font-size:12px;line-height:15px;color:#1e1e1e;">111.736</div>
<div class="t" style="left:240.00px;top:543.34px;width:80px;text-align:center;font-size:12px;line-height:15px;color:#1e1e1e;">600000</div>
<div class="t" style="left:320.00px;top:543.34px;width:80px;text-align:center;font-size:12px;line-height:15px;color:#1e1e1e;">0.0205671</div>
<div class="t" style="left:400.00px;top:543.34px;width:80px;text-align:center;font-size:12px;line-height:15px;color:#1e1e1e;">0.00743247</div>
<div class="t" style="left:480.00px;top:543.34px;width:80px;text-align:center;font-size:12px;line-height:15px;color:#1e1e1e;">0.482759</div>
<div class="t" style="left:560.00px;top:543.34px;width:80px;text-align:center;font-size:12px;line-height:15px;color:#1e1e1e;">0.0993498</div>
<div class="t" style="left:640.00px;top:543.34px;width:80px;text-align:center;font-size:12px;line-height:15px;color:#1e1e1e;"><span class="m">-</span>0.265515</div>
<div class="t" style="left:720.00px;top:543.34px;width:80px;text-align:center;font-size:12px;line-height:15px;color:#1e1e1e;">0.29786</div>
<div class="t" style="left:800.00px;top:543.34px;width:80px;text-align:center;font-size:12px;line-height:15px;color:#1e1e1e;"><span class="m">-</span>0.0535487</div>
<div class="t" style="left:880.00px;top:543.34px;width:80px;text-align:center;font-size:12px;line-height:15px;color:#1e1e1e;"><span class="m">-</span>0.858832</div>
<div class="t" style="left:960.00px;top:543.34px;width:80px;text-align:center;font-size:12px;line-height:15px;color:#1e1e1e;">5.90337</div>
<div class="t" style="left:1040.00px;top:543.34px;width:80px;text-align:center;font-size:12px;line-height:15px;color:#1e1e1e;">6.04734</div>
<div class="t" style="left:0.00px;top:563.34px;width:80px;text-align:center;font-size:12px;line-height:15px;color:#1e1e1e;">29.</div>
<div class="t" style="left:80.00px;top:563.34px;width:80px;text-align:center;font-size:12px;line-height:15px;color:#1e1e1e;">110.252</div>
<div class="t" style="left:160.00px;top:563.34px;width:80px;text-align:center;font-size:12px;line-height:15px;color:#1e1e1e;">113.769</div>
<div class="t" style="left:240.00px;top:563.34px;width:80px;text-align:center;font-size:12px;line-height:15px;color:#1e1e1e;">600000</div>
<div class="t" style="left:320.00px;top:563.34px;width:80px;text-align:center;font-size:12px;line-height:15px;color:#1e1e1e;">0.0205671</div>
<div class="t" style="left:400.00px;top:563.34px;width:80px;text-align:center;font-size:12px;line-height:15px;color:#1e1e1e;">0.00743247</div>
<div class="t" style="left:480.00px;top:563.34px;width:80px;text-align:center;font-size:12px;line-height:15px;color:#1e1e1e;">0.491379</div>
<div class="t" style="left:560.00px;top:563.34px;width:80px;text-align:center;font-size:12px;line-height:15px;color:#1e1e1e;">0.0993498</div>
<div class="t" style="left:640.00px;top:563.34px;width:80px;text-align:center;font-size:12px;line-height:15px;color:#1e1e1e;"><span class="m">-</span>0.265515</div>
<div class="t" style="left:720.00px;top:563.34px;width:80px;text-align:center;font-size:12px;line-height:15px;color:#1e1e1e;">0.29786</div>
<div class="t" style="left:800.00px;top:563.34px;width:80px;text-align:center;font-size:12px;line-height:15px;color:#1e1e1e;"><span class="m">-</span>0.0535487</div>
<div class="t" style="left:880.00px;top:563.34px;width:80px;text-align:center;font-size:12px;line-height:15px;color:#1e1e1e;"><span class="m">-</span>0.858832</div>
<div class="t" style="left:960.00px;top:563.34px;width:80px;text-align:center;font-size:12px;line-height:15px;color:#1e1e1e;">5.90337</div>
<div class="t" style="left:1040.00px;top:563.34px;width:80px;text-align:center;font-size:12px;line-height:15px;color:#1e1e1e;">6.04734</div>
<div class="t" style="left:0.00px;top:583.34px;width:80px;text-align:center;font-size:12px;line-height:15px;color:#1e1e1e;">30.</div>
<div class="t" style="left:80.00px;top:583.34px;width:80px;text-align:center;font-size:12px;line-height:15px;color:#1e1e1e;">111.54</div>
<div class="t" style="left:160.00px;top:583.34px;width:80px;text-align:center;font-size:12px;line-height:15px;color:#1e1e1e;">115.99</div>
<div class="t" style="left:240.00px;top:583.34px;width:80px;text-align:center;font-size:12px;line-height:15px;color:#1e1e1e;">600000</div>
<div class="t" style="left:320.00px;top:583.34px;width:80px;text-align:center;font-size:12px;line-height:15px;color:#1e1e1e;">0.0205671</div>
<div class="t" style="left:400.00px;top:583.34px;width:80px;text-align:center;font-size:12px;line-height:15px;color:#1e1e1e;">0.00743247</div>
<div class="t" style="left:480.00px;top:583.34px;width:80px;text-align:center;font-size:12px;line-height:15px;color:#1e1e1e;">0.5</div>
<div class="t" style="left:560.00px;top:583.34px;width:80px;text-align:center;font-size:12px;line-height:15px;color:#1e1e1e;">0.0993498</div>
<div class="t" style="left:640.00px;top:583.34px;width:80px;text-align:center;font-size:12px;line-height:15px;color:#1e1e1e;"><span class="m">-</span>0.265515</div>
<div class="t" style="left:720.00px;top:583.34px;width:80px;text-align:center;font-size:12px;line-height:15px;color:#1e1e1e;">0.29786</div>
<div class="t" style="left:800.00px;top:583.34px;width:80px;text-align:center;font-size:12px;line-height:15px;color:#1e1e1e;"><span class="m">-</span>0.0535487</div>
<div class="t" style="left:880.00px;top:583.34px;width:80px;text-align:center;font-size:12px;line-height:15px;color:#1e1e1e;"><span class="m">-</span>0.858832</div>
<div class="t" style="left:960.00px;top:583.34px;width:80px;text-align:center;font-size:12px;line-height:15px;color:#1e1e1e;">5.90337</div>
<div class="t" style="left:1040.00px;top:583.34px;width:80px;text-align:center;font-size:12px;line-height:15px;color:#1e1e1e;">6.04734</div>
<div class="t" style="left:0.00px;top:603.34px;width:80px;text-align:center;font-size:12px;line-height:15px;color:#1e1e1e;">31.</div>
<div class="t" style="left:80.00px;top:603.34px;width:80px;text-align:center;font-size:12px;line-height:15px;color:#1e1e1e;">82.8024</div>
<div class="t" style="left:160.00px;top:603.34px;width:80px;text-align:center;font-size:12px;line-height:15px;color:#1e1e1e;">90.3796</div>
<div class="t" style="left:240.00px;top:603.34px;width:80px;text-align:center;font-size:12px;line-height:15px;color:#1e1e1e;">631034</div>
<div class="t" style="left:320.00px;top:603.34px;width:80px;text-align:center;font-size:12px;line-height:15px;color:#1e1e1e;">0.0205671</div>
<div class="t" style="left:400.00px;top:603.34px;width:80px;text-align:center;font-size:12px;line-height:15px;color:#1e1e1e;">0.00743247</div>
<div class="t" style="left:480.00px;top:603.34px;width:80px;text-align:center;font-size:12px;line-height:15px;color:#1e1e1e;">0.25</div>
<div class="t" style="left:560.00px;top:603.34px;width:80px;text-align:center;font-size:12px;line-height:15px;color:#1e1e1e;">0.0993498</div>
<div class="t" style="left:640.00px;top:603.34px;width:80px;text-align:center;font-size:12px;line-height:15px;color:#1e1e1e;"><span class="m">-</span>0.265515</div>
<div class="t" style="left:720.00px;top:603.34px;width:80px;text-align:center;font-size:12px;line-height:15px;color:#1e1e1e;">0.29786</div>
<div class="t" style="left:800.00px;top:603.34px;width:80px;text-align:center;font-size:12px;line-height:15px;color:#1e1e1e;"><span class="m">-</span>0.0535487</div>
<div class="t" style="left:880.00px;top:603.34px;width:80px;text-align:center;font-size:12px;line-height:15px;color:#1e1e1e;"><span class="m">-</span>0.858832</div>
<div class="t" style="left:960.00px;top:603.34px;width:80px;text-align:center;font-size:12px;line-height:15px;color:#1e1e1e;">5.90337</div>
<div class="t" style="left:1040.00px;top:603.34px;width:80px;text-align:center;font-size:12px;line-height:15px;color:#1e1e1e;">6.04734</div>
<div class="t" style="left:0.00px;top:623.34px;width:80px;text-align:center;font-size:12px;line-height:15px;color:#1e1e1e;">32.</div>
<div class="t" style="left:80.00px;top:623.34px;width:80px;text-align:center;font-size:12px;line-height:15px;color:#1e1e1e;">88.2231</div>
<div class="t" style="left:160.00px;top:623.34px;width:80px;text-align:center;font-size:12px;line-height:15px;color:#1e1e1e;">93.3696</div>
<div class="t" style="left:240.00px;top:623.34px;width:80px;text-align:center;font-size:12px;line-height:15px;color:#1e1e1e;">631034</div>
<div class="t" style="left:320.00px;top:623.34px;width:80px;text-align:center;font-size:12px;line-height:15px;color:#1e1e1e;">0.0205671</div>
<div class="t" style="left:400.00px;top:623.34px;width:80px;text-align:center;font-size:12px;line-height:15px;color:#1e1e1e;">0.00743247</div>
<div class="t" style="left:480.00px;top:623.34px;width:80px;text-align:center;font-size:12px;line-height:15px;color:#1e1e1e;">0.258621</div>
<div class="t" style="left:560.00px;top:623.34px;width:80px;text-align:center;font-size:12px;line-height:15px;color:#1e1e1e;">0.0993498</div>
<div class="t" style="left:640.00px;top:623.34px;width:80px;text-align:center;font-size:12px;line-height:15px;color:#1e1e1e;"><span class="m">-</span>0.265515</div>
<div class="t" style="left:720.00px;top:623.34px;width:80px;text-align:center;font-size:12px;line-height:15px;color:#1e1e1e;">0.29786</div>
<div class="t" style="left:800.00px;top:623.34px;width:80px;text-align:center;font-size:12px;line-height:15px;color:#1e1e1e;"><span class="m">-</span>0.0535487</div>
<div class="t" style="left:880.00px;top:623.34px;width:80px;text-align:center;font-size:12px;line-height:15px;color:#1e1e1e;"><span class="m">-</span>0.858832</div>
<div class="t" style="left:960.00px;top:623.34px;width:80px;text-align:center;font-size:12px;line-height:15px;color:#1e1e1e;">5.90337</div>
<div class="t" style="left:1040.00px;top:623.34px;width:80px;text-align:center;font-size:12px;line-height:15px;color:#1e1e1e;">6.04734</div>
<div class="t" style="left:0.00px;top:643.34px;width:80px;text-align:center;font-size:12px;line-height:15px;color:#1e1e1e;">33.</div>
<div class="t" style="left:80.00px;top:643.34px;width:80px;text-align:center;font-size:12px;line-height:15px;color:#1e1e1e;">93.1683</div>
<div class="t" style="left:160.00px;top:643.34px;width:80px;text-align:center;font-size:12px;line-height:15px;color:#1e1e1e;">96.2778</div>
<div class="t" style="left:240.00px;top:643.34px;width:80px;text-align:center;font-size:12px;line-height:15px;color:#1e1e1e;">631034</div>
<div class="t" style="left:320.00px;top:643.34px;width:80px;text-align:center;font-size:12px;line-height:15px;color:#1e1e1e;">0.0205671</div>
<div class="t" style="left:400.00px;top:643.34px;width:80px;text-align:center;font-size:12px;line-height:15px;color:#1e1e1e;">0.00743247</div>
<div class="t" style="left:480.00px;top:643.34px;width:80px;text-align:center;font-size:12px;line-height:15px;color:#1e1e1e;">0.267241</div>
<div class="t" style="left:560.00px;top:643.34px;width:80px;text-align:center;font-size:12px;line-height:15px;color:#1e1e1e;">0.0993498</div>
<div class="t" style="left:640.00px;top:643.34px;width:80px;text-align:center;font-size:12px;line-height:15px;color:#1e1e1e;"><span class="m">-</span>0.265515</div>
<div class="t" style="left:720.00px;top:643.34px;width:80px;text-align:center;font-size:12px;line-height:15px;color:#1e1e1e;">0.29786</div>
<div class="t" style="left:800.00px;top:643.34px;width:80px;text-align:center;font-size:12px;line-height:15px;color:#1e1e1e;"><span class="m">-</span>0.0535487</div>
<div class="t" style="left:880.00px;top:643.34px;width:80px;text-align:center;font-size:12px;line-height:15px;color:#1e1e1e;"><span class="m">-</span>0.858832</div>
<div class="t" style="left:960.00px;top:643.34px;width:80px;text-align:center;font-size:12px;line-height:15px;color:#1e1e1e;">5.90337</div>
<div class="t" style="left:1040.00px;top:643.34px;width:80px;text-align:center;font-size:12px;line-height:15px;color:#1e1e1e;">6.04734</div>
<div class="t" style="left:0.00px;top:663.34px;width:80px;text-align:center;font-size:12px;line-height:15px;color:#1e1e1e;">34.</div>
<div class="t" style="left:80.00px;top:663.34px;width:80px;text-align:center;font-size:12px;line-height:15px;color:#1e1e1e;">96.9254</div>
<div class="t" style="left:160.00px;top:663.34px;width:80px;text-align:center;font-size:12px;line-height:15px;color:#1e1e1e;">98.6631</div>
<div class="t" style="left:240.00px;top:663.34px;width:80px;text-align:center;font-size:12px;line-height:15px;color:#1e1e1e;">631034</div>
<div class="t" style="left:320.00px;top:663.34px;width:80px;text-align:center;font-size:12px;line-height:15px;color:#1e1e1e;">0.0205671</div>
<div class="t" style="left:400.00px;top:663.34px;width:80px;text-align:center;font-size:12px;line-height:15px;color:#1e1e1e;">0.00743247</div>
<div class="t" style="left:480.00px;top:663.34px;width:80px;text-align:center;font-size:12px;line-height:15px;color:#1e1e1e;">0.275862</div>
<div class="t" style="left:560.00px;top:663.34px;width:80px;text-align:center;font-size:12px;line-height:15px;color:#1e1e1e;">0.0993498</div>
<div class="t" style="left:640.00px;top:663.34px;width:80px;text-align:center;font-size:12px;line-height:15px;color:#1e1e1e;"><span class="m">-</span>0.265515</div>
<div class="t" style="left:720.00px;top:663.34px;width:80px;text-align:center;font-size:12px;line-height:15px;color:#1e1e1e;">0.29786</div>
<div class="t" style="left:800.00px;top:663.34px;width:80px;text-align:center;font-size:12px;line-height:15px;color:#1e1e1e;"><span class="m">-</span>0.0535487</div>
<div class="t" style="left:880.00px;top:663.34px;width:80px;text-align:center;font-size:12px;line-height:15px;color:#1e1e1e;"><span class="m">-</span>0.858832</div>
<div class="t" style="left:960.00px;top:663.34px;width:80px;text-align:center;font-size:12px;line-height:15px;color:#1e1e1e;">5.90337</div>
<div class="t" style="left:1040.00px;top:663.34px;width:80px;text-align:center;font-size:12px;line-height:15px;color:#1e1e1e;">6.04734</div>
<div class="t" style="left:0.00px;top:683.34px;width:80px;text-align:center;font-size:12px;line-height:15px;color:#1e1e1e;">35.</div>
<div class="t" style="left:80.00px;top:683.34px;width:80px;text-align:center;font-size:12px;line-height:15px;color:#1e1e1e;">99.7319</div>
<div class="t" style="left:160.00px;top:683.34px;width:80px;text-align:center;font-size:12px;line-height:15px;color:#1e1e1e;">100.603</div>
<div class="t" style="left:240.00px;top:683.34px;width:80px;text-align:center;font-size:12px;line-height:15px;color:#1e1e1e;">631034</div>
<div class="t" style="left:320.00px;top:683.34px;width:80px;text-align:center;font-size:12px;line-height:15px;color:#1e1e1e;">0.0205671</div>
<div class="t" style="left:400.00px;top:683.34px;width:80px;text-align:center;font-size:12px;line-height:15px;color:#1e1e1e;">0.00743247</div>
<div class="t" style="left:480.00px;top:683.34px;width:80px;text-align:center;font-size:12px;line-height:15px;color:#1e1e1e;">0.284483</div>
<div class="t" style="left:560.00px;top:683.34px;width:80px;text-align:center;font-size:12px;line-height:15px;color:#1e1e1e;">0.0993498</div>
<div class="t" style="left:640.00px;top:683.34px;width:80px;text-align:center;font-size:12px;line-height:15px;color:#1e1e1e;"><span class="m">-</span>0.265515</div>
<div class="t" style="left:720.00px;top:683.34px;width:80px;text-align:center;font-size:12px;line-height:15px;color:#1e1e1e;">0.29786</div>
<div class="t" style="left:800.00px;top:683.34px;width:80px;text-align:center;font-size:12px;line-height:15px;color:#1e1e1e;"><span class="m">-</span>0.0535487</div>
<div class="t" style="left:880.00px;top:683.34px;width:80px;text-align:center;font-size:12px;line-height:15px;color:#1e1e1e;"><span class="m">-</span>0.858832</div>
<div class="t" style="left:960.00px;top:683.34px;width:80px;text-align:center;font-size:12px;line-height:15px;color:#1e1e1e;">5.90337</div>
<div class="t" style="left:1040.00px;top:683.34px;width:80px;text-align:center;font-size:12px;line-height:15px;color:#1e1e1e;">6.04734</div>
<div class="t" style="left:0.00px;top:703.34px;width:80px;text-align:center;font-size:12px;line-height:15px;color:#1e1e1e;">36.</div>
<div class="t" style="left:80.00px;top:703.34px;width:80px;text-align:center;font-size:12px;line-height:15px;color:#1e1e1e;">101.79</div>
<div class="t" style="left:160.00px;top:703.34px;width:80px;text-align:center;font-size:12px;line-height:15px;color:#1e1e1e;">102.164</div>
<div class="t" style="left:240.00px;top:703.34px;width:80px;text-align:center;font-size:12px;line-height:15px;color:#1e1e1e;">631034</div>
<div class="t" style="left:320.00px;top:703.34px;width:80px;text-align:center;font-size:12px;line-height:15px;color:#1e1e1e;">0.0205671</div>
<div class="t" style="left:400.00px;top:703.34px;width:80px;text-align:center;font-size:12px;line-height:15px;color:#1e1e1e;">0.00743247</div>
<div class="t" style="left:480.00px;top:703.34px;width:80px;text-align:center;font-size:12px;line-height:15px;color:#1e1e1e;">0.293103</div>
<div class="t" style="left:560.00px;top:703.34px;width:80px;text-align:center;font-size:12px;line-height:15px;color:#1e1e1e;">0.0993498</div>
<div class="t" style="left:640.00px;top:703.34px;width:80px;text-align:center;font-size:12px;line-height:15px;color:#1e1e1e;"><span class="m">-</span>0.265515</div>
<div class="t" style="left:720.00px;top:703.34px;width:80px;text-align:center;font-size:12px;line-height:15px;color:#1e1e1e;">0.29786</div>
<div class="t" style="left:800.00px;top:703.34px;width:80px;text-align:center;font-size:12px;line-height:15px;color:#1e1e1e;"><span class="m">-</span>0.0535487</div>
<div class="t" style="left:880.00px;top:703.34px;width:80px;text-align:center;font-size:12px;line-height:15px;color:#1e1e1e;"><span class="m">-</span>0.858832</div>
<div class="t" style="left:960.00px;top:703.34px;width:80px;text-align:center;font-size:12px;line-height:15px;color:#1e1e1e;">5.90337</div>
<div class="t" style="left:1040.00px;top:703.34px;width:80px;text-align:center;font-size:12px;line-height:15px;color:#1e1e1e;">6.04734</div>
<div class="t" style="left:0.00px;top:723.34px;width:80px;text-align:center;font-size:12px;line-height:15px;color:#1e1e1e;">37.</div>
<div class="t" style="left:80.00px;top:723.34px;width:80px;text-align:center;font-size:12px;line-height:15px;color:#1e1e1e;">103.269</div>
<div class="t" style="left:160.00px;top:723.34px;width:80px;text-align:center;font-size:12px;line-height:15px;color:#1e1e1e;">103.406</div>
<div class="t" style="left:240.00px;top:723.34px;width:80px;text-align:center;font-size:12px;line-height:15px;color:#1e1e1e;">631034</div>
<div class="t" style="left:320.00px;top:723.34px;width:80px;text-align:center;font-size:12px;line-height:15px;color:#1e1e1e;">0.0205671</div>
<div class="t" style="left:400.00px;top:723.34px;width:80px;text-align:center;font-size:12px;line-height:15px;color:#1e1e1e;">0.00743247</div>
<div class="t" style="left:480.00px;top:723.34px;width:80px;text-align:center;font-size:12px;line-height:15px;color:#1e1e1e;">0.301724</div>
<div class="t" style="left:560.00px;top:723.34px;width:80px;text-align:center;font-size:12px;line-height:15px;color:#1e1e1e;">0.0993498</div>
<div class="t" style="left:640.00px;top:723.34px;width:80px;text-align:center;font-size:12px;line-height:15px;color:#1e1e1e;"><span class="m">-</span>0.265515</div>
<div class="t" style="left:720.00px;top:723.34px;width:80px;text-align:center;font-size:12px;line-height:15px;color:#1e1e1e;">0.29786</div>
<div class="t" style="left:800.00px;top:723.34px;width:80px;text-align:center;font-size:12px;line-height:15px;color:#1e1e1e;"><span class="m">-</span>0.0535487</div>
<div class="t" style="left:880.00px;top:723.34px;width:80px;text-align:center;font-size:12px;line-height:15px;color:#1e1e1e;"><span class="m">-</span>0.858832</div>
<div class="t" style="left:960.00px;top:723.34px;width:80px;text-align:center;font-size:12px;line-height:15px;color:#1e1e1e;">5.90337</div>
<div class="t" style="left:1040.00px;top:723.34px;width:80px;text-align:center;font-size:12px;line-height:15px;color:#1e1e1e;">6.04734</div>
<div class="t" style="left:0.00px;top:743.34px;width:80px;text-align:center;font-size:12px;line-height:15px;color:#1e1e1e;">38.</div>
<div class="t" style="left:80.00px;top:743.34px;width:80px;text-align:center;font-size:12px;line-height:15px;color:#1e1e1e;">104.329</div>
<div class="t" style="left:160.00px;top:743.34px;width:80px;text-align:center;font-size:12px;line-height:15px;color:#1e1e1e;">104.38</div>
<div class="t" style="left:240.00px;top:743.34px;width:80px;text-align:center;font-size:12px;line-height:15px;color:#1e1e1e;">631034</div>
<div class="t" style="left:320.00px;top:743.34px;width:80px;text-align:center;font-size:12px;line-height:15px;color:#1e1e1e;">0.0205671</div>
<div class="t" style="left:400.00px;top:743.34px;width:80px;text-align:center;font-size:12px;line-height:15px;color:#1e1e1e;">0.00743247</div>
<div class="t" style="left:480.00px;top:743.34px;width:80px;text-align:center;font-size:12px;line-height:15px;color:#1e1e1e;">0.310345</div>
<div class="t" style="left:560.00px;top:743.34px;width:80px;text-align:center;font-size:12px;line-height:15px;color:#1e1e1e;">0.0993498</div>
<div class="t" style="left:640.00px;top:743.34px;width:80px;text-align:center;font-size:12px;line-height:15px;color:#1e1e1e;"><span class="m">-</span>0.265515</div>
<div class="t" style="left:720.00px;top:743.34px;width:80px;text-align:center;font-size:12px;line-height:15px;color:#1e1e1e;">0.29786</div>
<div class="t" style="left:800.00px;top:743.34px;width:80px;text-align:center;font-size:12px;line-height:15px;color:#1e1e1e;"><span class="m">-</span>0.0535487</div>
<div class="t" style="left:880.00px;top:743.34px;width:80px;text-align:center;font-size:12px;line-height:15px;color:#1e1e1e;"><span class="m">-</span>0.858832</div>
<div class="t" style="left:960.00px;top:743.34px;width:80px;text-align:center;font-size:12px;line-height:15px;color:#1e1e1e;">5.90337</div>
<div class="t" style="left:1040.00px;top:743.34px;width:80px;text-align:center;font-size:12px;line-height:15px;color:#1e1e1e;">6.04734</div>
<div class="t" style="left:0.00px;top:763.34px;width:80px;text-align:center;font-size:12px;line-height:15px;color:#1e1e1e;">39.</div>
<div class="t" style="left:80.00px;top:763.34px;width:80px;text-align:center;font-size:12px;line-height:15px;color:#1e1e1e;">105.05</div>
<div class="t" style="left:160.00px;top:763.34px;width:80px;text-align:center;font-size:12px;line-height:15px;color:#1e1e1e;">105.13</div>
<div class="t" style="left:240.00px;top:763.34px;width:80px;text-align:center;font-size:12px;line-height:15px;color:#1e1e1e;">631034</div>
<div class="t" style="left:320.00px;top:763.34px;width:80px;text-align:center;font-size:12px;line-height:15px;color:#1e1e1e;">0.0205671</div>
<div class="t" style="left:400.00px;top:763.34px;width:80px;text-align:center;font-size:12px;line-height:15px;color:#1e1e1e;">0.00743247</div>
<div class="t" style="left:480.00px;top:763.34px;width:80px;text-align:center;font-size:12px;line-height:15px;color:#1e1e1e;">0.318966</div>
<div class="t" style="left:560.00px;top:763.34px;width:80px;text-align:center;font-size:12px;line-height:15px;color:#1e1e1e;">0.0993498</div>
<div class="t" style="left:640.00px;top:763.34px;width:80px;text-align:center;font-size:12px;line-height:15px;color:#1e1e1e;"><span class="m">-</span>0.265515</div>
<div class="t" style="left:720.00px;top:763.34px;width:80px;text-align:center;font-size:12px;line-height:15px;color:#1e1e1e;">0.29786</div>
<div class="t" style="left:800.00px;top:763.34px;width:80px;text-align:center;font-size:12px;line-height:15px;color:#1e1e1e;"><span class="m">-</span>0.0535487</div>
<div class="t" style="left:880.00px;top:763.34px;width:80px;text-align:center;font-size:12px;line-height:15px;color:#1e1e1e;"><span class="m">-</span>0.858832</div>
<div class="t" style="left:960.00px;top:763.34px;width:80px;text-align:center;font-size:12px;line-height:15px;color:#1e1e1e;">5.90337</div>
<div class="t" style="left:1040.00px;top:763.34px;width:80px;text-align:center;font-size:12px;line-height:15px;color:#1e1e1e;">6.04734</div>
<div class="t" style="left:0.00px;top:783.34px;width:80px;text-align:center;font-size:12px;line-height:15px;color:#1e1e1e;">40.</div>
<div class="t" style="left:80.00px;top:783.34px;width:80px;text-align:center;font-size:12px;line-height:15px;color:#1e1e1e;">105.542</div>
<div class="t" style="left:160.00px;top:783.34px;width:80px;text-align:center;font-size:12px;line-height:15px;color:#1e1e1e;">105.693</div>
<div class="t" style="left:240.00px;top:783.34px;width:80px;text-align:center;font-size:12px;line-height:15px;color:#1e1e1e;">631034</div>
<div class="t" style="left:320.00px;top:783.34px;width:80px;text-align:center;font-size:12px;line-height:15px;color:#1e1e1e;">0.0205671</div>
<div class="t" style="left:400.00px;top:783.34px;width:80px;text-align:center;font-size:12px;line-height:15px;color:#1e1e1e;">0.00743247</div>
<div class="t" style="left:480.00px;top:783.34px;width:80px;text-align:center;font-size:12px;line-height:15px;color:#1e1e1e;">0.327586</div>
<div class="t" style="left:560.00px;top:783.34px;width:80px;text-align:center;font-size:12px;line-height:15px;color:#1e1e1e;">0.0993498</div>
<div class="t" style="left:640.00px;top:783.34px;width:80px;text-align:center;font-size:12px;line-height:15px;color:#1e1e1e;"><span class="m">-</span>0.265515</div>
<div class="t" style="left:720.00px;top:783.34px;width:80px;text-align:center;font-size:12px;line-height:15px;color:#1e1e1e;">0.29786</div>
<div class="t" style="left:800.00px;top:783.34px;width:80px;text-align:center;font-size:12px;line-height:15px;color:#1e1e1e;"><span class="m">-</span>0.0535487</div>
<div class="t" style="left:880.00px;top:783.34px;width:80px;text-align:center;font-size:12px;line-height:15px;color:#1e1e1e;"><span class="m">-</span>0.858832</div>
<div class="t" style="left:960.00px;top:783.34px;width:80px;text-align:center;font-size:12px;line-height:15px;color:#1e1e1e;">5.90337</div>
<div class="t" style="left:1040.00px;top:783.34px;width:80px;text-align:center;font-size:12px;line-height:15px;color:#1e1e1e;">6.04734</div>
<div class="t" style="left:0.00px;top:803.34px;width:80px;text-align:center;font-size:12px;line-height:15px;color:#1e1e1e;">41.</div>
<div class="t" style="left:80.00px;top:803.34px;width:80px;text-align:center;font-size:12px;line-height:15px;color:#1e1e1e;">105.879</div>
<div class="t" style="left:160.00px;top:803.34px;width:80px;text-align:center;font-size:12px;line-height:15px;color:#1e1e1e;">106.104</div>
<div class="t" style="left:240.00px;top:803.34px;width:80px;text-align:center;font-size:12px;line-height:15px;color:#1e1e1e;">631034</div>
<div class="t" style="left:320.00px;top:803.34px;width:80px;text-align:center;font-size:12px;line-height:15px;color:#1e1e1e;">0.0205671</div>
<div class="t" style="left:400.00px;top:803.34px;width:80px;text-align:center;font-size:12px;line-height:15px;color:#1e1e1e;">0.00743247</div>
<div class="t" style="left:480.00px;top:803.34px;width:80px;text-align:center;font-size:12px;line-height:15px;color:#1e1e1e;">0.336207</div>
<div class="t" style="left:560.00px;top:803.34px;width:80px;text-align:center;font-size:12px;line-height:15px;color:#1e1e1e;">0.0993498</div>
<div class="t" style="left:640.00px;top:803.34px;width:80px;text-align:center;font-size:12px;line-height:15px;color:#1e1e1e;"><span class="m">-</span>0.265515</div>
<div class="t" style="left:720.00px;top:803.34px;width:80px;text-align:center;font-size:12px;line-height:15px;color:#1e1e1e;">0.29786</div>
<div class="t" style="left:800.00px;top:803.34px;width:80px;text-align:center;font-size:12px;line-height:15px;color:#1e1e1e;"><span class="m">-</span>0.0535487</div>
<div class="t" style="left:880.00px;top:803.34px;width:80px;text-align:center;font-size:12px;line-height:15px;color:#1e1e1e;"><span class="m">-</span>0.858832</div>
<div class="t" style="left:960.00px;top:803.34px;width:80px;text-align:center;font-size:12px;line-height:15px;color:#1e1e1e;">5.90337</div>
<div class="t" style="left:1040.00px;top:803.34px;width:80px;text-align:center;font-size:12px;line-height:15px;color:#1e1e1e;">6.04734</div>
<div class="t" style="left:0.00px;top:823.34px;width:80px;text-align:center;font-size:12px;line-height:15px;color:#1e1e1e;">42.</div>
<div class="t" style="left:80.00px;top:823.34px;width:80px;text-align:center;font-size:12px;line-height:15px;color:#1e1e1e;">106.116</div>
<div class="t" style="left:160.00px;top:823.34px;width:80px;text-align:center;font-size:12px;line-height:15px;color:#1e1e1e;">106.389</div>
<div class="t" style="left:240.00px;top:823.34px;width:80px;text-align:center;font-size:12px;line-height:15px;color:#1e1e1e;">631034</div>
<div class="t" style="left:320.00px;top:823.34px;width:80px;text-align:center;font-size:12px;line-height:15px;color:#1e1e1e;">0.0205671</div>
<div class="t" style="left:400.00px;top:823.34px;width:80px;text-align:center;font-size:12px;line-height:15px;color:#1e1e1e;">0.00743247</div>
<div class="t" style="left:480.00px;top:823.34px;width:80px;text-align:center;font-size:12px;line-height:15px;color:#1e1e1e;">0.344828</div>
<div class="t" style="left:560.00px;top:823.34px;width:80px;text-align:center;font-size:12px;line-height:15px;color:#1e1e1e;">0.0993498</div>
<div class="t" style="left:640.00px;top:823.34px;width:80px;text-align:center;font-size:12px;line-height:15px;color:#1e1e1e;"><span class="m">-</span>0.265515</div>
<div class="t" style="left:720.00px;top:823.34px;width:80px;text-align:center;font-size:12px;line-height:15px;color:#1e1e1e;">0.29786</div>
<div class="t" style="left:800.00px;top:823.34px;width:80px;text-align:center;font-size:12px;line-height:15px;color:#1e1e1e;"><span class="m">-</span>0.0535487</div>
<div class="t" style="left:880.00px;top:823.34px;width:80px;text-align:center;font-size:12px;line-height:15px;color:#1e1e1e;"><span class="m">-</span>0.858832</div>
<div class="t" style="left:960.00px;top:823.34px;width:80px;text-align:center;font-size:12px;line-height:15px;color:#1e1e1e;">5.90337</div>
<div class="t" style="left:1040.00px;top:823.34px;width:80px;text-align:center;font-size:12px;line-height:15px;color:#1e1e1e;">6.04734</div>
<div class="t" style="left:0.00px;top:843.34px;width:80px;text-align:center;font-size:12px;line-height:15px;color:#1e1e1e;">43.</div>
<div class="t" style="left:80.00px;top:843.34px;width:80px;text-align:center;font-size:12px;line-height:15px;color:#1e1e1e;">106.296</div>
<div class="t" style="left:160.00px;top:843.34px;width:80px;text-align:center;font-size:12px;line-height:15px;color:#1e1e1e;">106.572</div>
<div class="t" style="left:240.00px;top:843.34px;width:80px;text-align:center;font-size:12px;line-height:15px;color:#1e1e1e;">631034</div>
<div class="t" style="left:320.00px;top:843.34px;width:80px;text-align:center;font-size:12px;line-height:15px;color:#1e1e1e;">0.0205671</div>
<div class="t" style="left:400.00px;top:843.34px;width:80px;text-align:center;font-size:12px;line-height:15px;color:#1e1e1e;">0.00743247</div>
<div class="t" style="left:480.00px;top:843.34px;width:80px;text-align:center;font-size:12px;line-height:15px;color:#1e1e1e;">0.353448</div>
<div class="t" style="left:560.00px;top:843.34px;width:80px;text-align:center;font-size:12px;line-height:15px;color:#1e1e1e;">0.0993498</div>
<div class="t" style="left:640.00px;top:843.34px;width:80px;text-align:center;font-size:12px;line-height:15px;color:#1e1e1e;"><span class="m">-</span>0.265515</div>
<div class="t" style="left:720.00px;top:843.34px;width:80px;text-align:center;font-size:12px;line-height:15px;color:#1e1e1e;">0.29786</div>
<div class="t" style="left:800.00px;top:843.34px;width:80px;text-align:center;font-size:12px;line-height:15px;color:#1e1e1e;"><span class="m">-</span>0.0535487</div>
<div class="t" style="left:880.00px;top:843.34px;width:80px;text-align:center;font-size:12px;line-height:15px;color:#1e1e1e;"><span class="m">-</span>0.858832</div>
<div class="t" style="left:960.00px;top:843.34px;width:80px;text-align:center;font-size:12px;line-height:15px;color:#1e1e1e;">5.90337</div>
<div class="t" style="left:1040.00px;top:843.34px;width:80px;text-align:center;font-size:12px;line-height:15px;color:#1e1e1e;">6.04734</div>
<div class="t" style="left:0.00px;top:863.34px;width:80px;text-align:center;font-size:12px;line-height:15px;color:#1e1e1e;">44.</div>
<div class="t" style="left:80.00px;top:863.34px;width:80px;text-align:center;font-size:12px;line-height:15px;color:#1e1e1e;">106.447</div>
<div class="t" style="left:160.00px;top:863.34px;width:80px;text-align:center;font-size:12px;line-height:15px;color:#1e1e1e;">106.677</div>
<div class="t" style="left:240.00px;top:863.34px;width:80px;text-align:center;font-size:12px;line-height:15px;color:#1e1e1e;">631034</div>
<div class="t" style="left:320.00px;top:863.34px;width:80px;text-align:center;font-size:12px;line-height:15px;color:#1e1e1e;">0.0205671</div>
<div class="t" style="left:400.00px;top:863.34px;width:80px;text-align:center;font-size:12px;line-height:15px;color:#1e1e1e;">0.00743247</div>
<div class="t" style="left:480.00px;top:863.34px;width:80px;text-align:center;font-size:12px;line-height:15px;color:#1e1e1e;">0.362069</div>
<div class="t" style="left:560.00px;top:863.34px;width:80px;text-align:center;font-size:12px;line-height:15px;color:#1e1e1e;">0.0993498</div>
<div class="t" style="left:640.00px;top:863.34px;width:80px;text-align:center;font-size:12px;line-height:15px;color:#1e1e1e;"><span class="m">-</span>0.265515</div>
<div class="t" style="left:720.00px;top:863.34px;width:80px;text-align:center;font-size:12px;line-height:15px;color:#1e1e1e;">0.29786</div>
<div class="t" style="left:800.00px;top:863.34px;width:80px;text-align:center;font-size:12px;line-height:15px;color:#1e1e1e;"><span class="m">-</span>0.0535487</div>
<div class="t" style="left:880.00px;top:863.34px;width:80px;text-align:center;font-size:12px;line-height:15px;color:#1e1e1e;"><span class="m">-</span>0.858832</div>
<div class="t" style="left:960.00px;top:863.34px;width:80px;text-align:center;font-size:12px;line-height:15px;color:#1e1e1e;">5.90337</div>
<div class="t" style="left:1040.00px;top:863.34px;width:80px;text-align:center;font-size:12px;line-height:15px;color:#1e1e1e;">6.04734</div>
<div class="t" style="left:0.00px;top:883.34px;width:80px;text-align:center;font-size:12px;line-height:15px;color:#1e1e1e;">45.</div>
<div class="t" style="left:80.00px;top:883.34px;width:80px;text-align:center;font-size:12px;line-height:15px;color:#1e1e1e;">106.59</div>
<div class="t" style="left:160.00px;top:883.34px;width:80px;text-align:center;font-size:12px;line-height:15px;color:#1e1e1e;">106.721</div>
<div class="t" style="left:240.00px;top:883.34px;width:80px;text-align:center;font-size:12px;line-height:15px;color:#1e1e1e;">631034</div>
<div class="t" style="left:320.00px;top:883.34px;width:80px;text-align:center;font-size:12px;line-height:15px;color:#1e1e1e;">0.0205671</div>
<div class="t" style="left:400.00px;top:883.34px;width:80px;text-align:center;font-size:12px;line-height:15px;color:#1e1e1e;">0.00743247</div>
<div class="t" style="left:480.00px;top:883.34px;width:80px;text-align:center;font-size:12px;line-height:15px;color:#1e1e1e;">0.37069</div>
<div class="t" style="left:560.00px;top:883.34px;width:80px;text-align:center;font-size:12px;line-height:15px;color:#1e1e1e;">0.0993498</div>
<div class="t" style="left:640.00px;top:883.34px;width:80px;text-align:center;font-size:12px;line-height:15px;color:#1e1e1e;"><span class="m">-</span>0.265515</div>
<div class="t" style="left:720.00px;top:883.34px;width:80px;text-align:center;font-size:12px;line-height:15px;color:#1e1e1e;">0.29786</div>
<div class="t" style="left:800.00px;top:883.34px;width:80px;text-align:center;font-size:12px;line-height:15px;color:#1e1e1e;"><span class="m">-</span>0.0535487</div>
<div class="t" style="left:880.00px;top:883.34px;width:80px;text-align:center;font-size:12px;line-height:15px;color:#1e1e1e;"><span class="m">-</span>0.858832</div>
<div class="t" style="left:960.00px;top:883.34px;width:80px;text-align:center;font-size:12px;line-height:15px;color:#1e1e1e;">5.90337</div>
<div class="t" style="left:1040.00px;top:883.34px;width:80px;text-align:center;font-size:12px;line-height:15px;color:#1e1e1e;">6.04734</div>
</div></div></body></html>
